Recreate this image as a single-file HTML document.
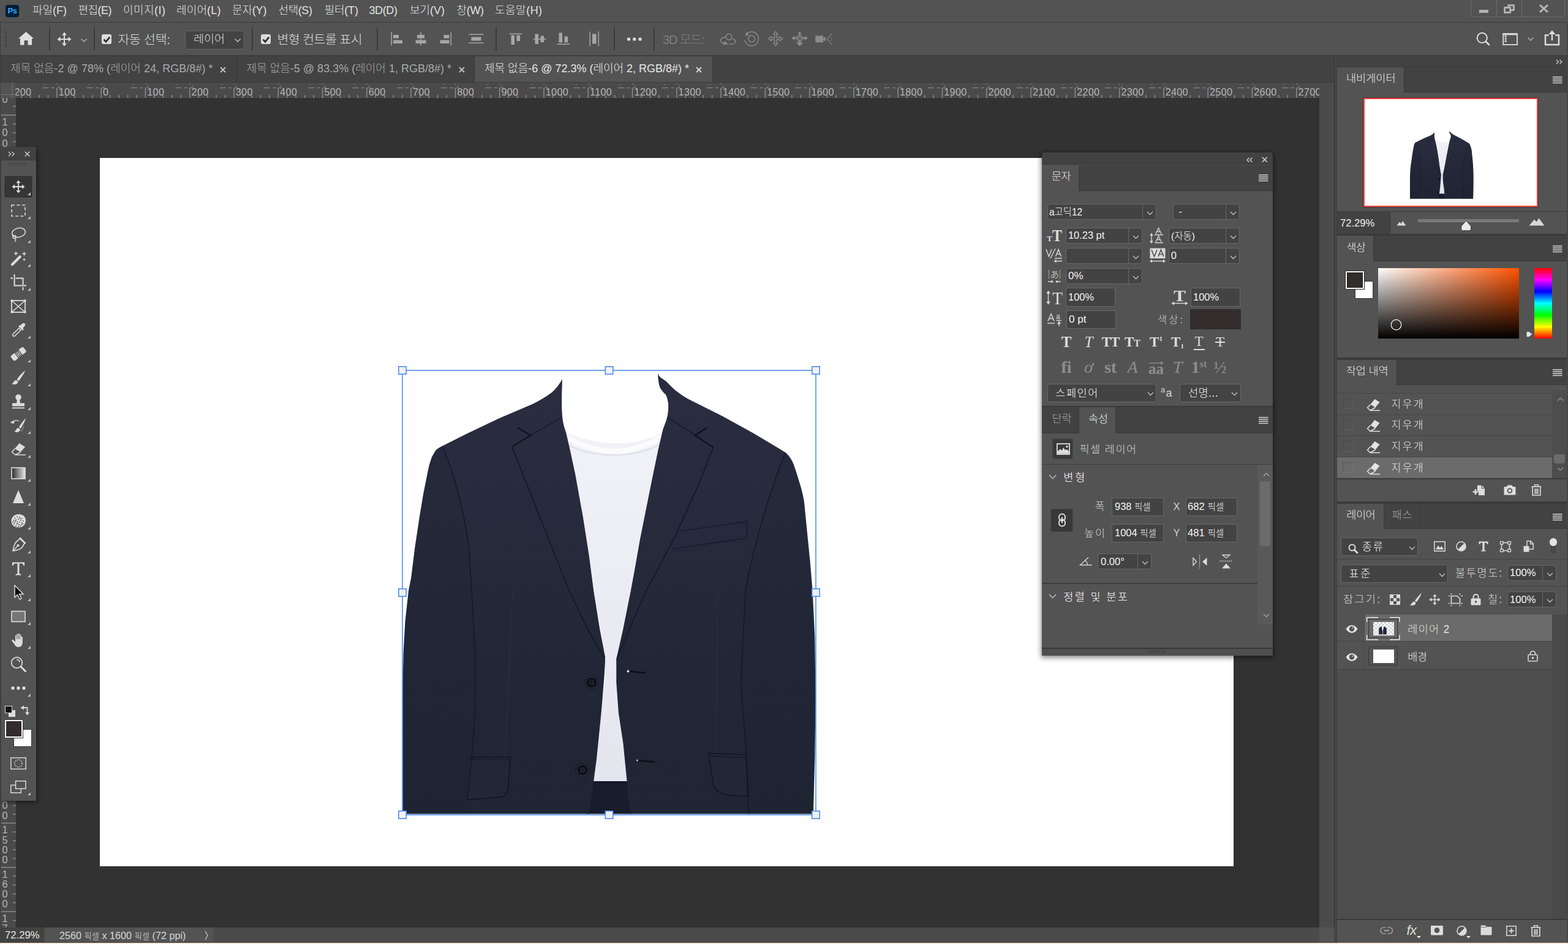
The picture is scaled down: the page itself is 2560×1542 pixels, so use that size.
<!DOCTYPE html>
<html lang="ko"><head><meta charset="utf-8"><title>Photoshop</title>
<style>

html,body{margin:0;padding:0;}
body{width:2560px;height:1542px;overflow:hidden;background:#535353;position:relative;font-family:'Liberation Sans','Noto Sans CJK KR',sans-serif;font-weight:300;}
div,span.t,svg{position:absolute;box-sizing:border-box;}
span.t{white-space:nowrap;display:block;}
svg{overflow:visible;}


.mi{color:#e2e2e2;font-size:18px;line-height:24px;top:5px;}




.sf{font-family:'Liberation Serif',serif;}


</style></head>
<body>
<div style="left:0px;top:92px;width:2179px;height:42px;background:#424242;"></div>
<div style="left:0px;top:135px;width:2154px;height:1380px;background:#323232;"></div>
<div style="left:2154px;top:135px;width:25px;height:1380px;background:#4b4b4b;"></div>
<div style="left:0px;top:35.5px;width:2560px;height:1.5px;background:#3c3c3c;"></div>
<div style="left:0px;top:90px;width:2560px;height:2px;background:#3c3c3c;"></div>
<div style="left:0px;top:134px;width:2179px;height:1px;background:#3a3a3a;"></div>
<div style="left:2178.8px;top:92px;width:4.5px;height:1448px;background:#4a4a4a;"></div>
<div style="left:2178.3px;top:92px;width:1.6px;height:1448px;background:#3b3b3b;"></div>
<div style="left:2182px;top:92px;width:1.3px;height:1448px;background:#3b3b3b;"></div>
<div style="left:0px;top:1515px;width:2179px;height:25px;background:#4b4b4b;"></div>
<div style="left:0px;top:1515px;width:72px;height:25px;background:#424242;"></div>
<div style="left:73px;top:1515px;width:275px;height:25px;background:#535353;"></div>
<span class="t" style="left:8px;top:1516.0px;font-size:17px;line-height:23px;color:#e6e6e6;transform:scaleX(0.9797);transform-origin:0 50%;">72.29%</span>
<span class="t" style="left:97px;top:1516.5px;font-size:17px;line-height:23px;color:#d8d8d8;transform:scaleX(0.9518);transform-origin:0 50%;">2560 <span style="font-size:14px">픽셀</span> x 1600 <span style="font-size:14px">픽셀</span> (72 ppi)</span>
<svg style="left:332px;top:1519px;" width="10" height="18" viewBox="0 0 10 18"><path d="M3 2 L7 9 L3 16" fill="none" stroke="#ccc" stroke-width="1.2"/></svg>
<div style="left:2154px;top:1515px;width:24.3px;height:24.5px;background:#545454;"></div>
<div style="left:0px;top:1539px;width:2560px;height:1px;background:#363636;"></div>
<div style="left:0px;top:1540px;width:2560px;height:2px;background:#efe4d6;"></div>
<div style="left:9px;top:7.5px;width:21.5px;height:20px;background:#001e36;border-radius:4px;"></div>
<span class="t" style="left:12.5px;top:9.5px;font-size:13px;line-height:16px;color:#31a8ff;font-weight:bold;letter-spacing:-0.3px;">Ps</span>
<span class="t" style="left:53px;top:5.3px;font-size:18px;line-height:24px;color:#e2e2e2;letter-spacing:-0.00px;">파일(F)</span>
<span class="t" style="left:127.5px;top:5.3px;font-size:18px;line-height:24px;color:#e2e2e2;letter-spacing:-0.56px;">편집(E)</span>
<span class="t" style="left:201px;top:5.3px;font-size:18px;line-height:24px;color:#e2e2e2;letter-spacing:0.45px;">이미지(I)</span>
<span class="t" style="left:288px;top:5.3px;font-size:18px;line-height:24px;color:#e2e2e2;letter-spacing:0.14px;">레이어(L)</span>
<span class="t" style="left:379px;top:5.3px;font-size:18px;line-height:24px;color:#e2e2e2;letter-spacing:-0.18px;">문자(Y)</span>
<span class="t" style="left:454.5px;top:5.3px;font-size:18px;line-height:24px;color:#e2e2e2;letter-spacing:-0.43px;">선택(S)</span>
<span class="t" style="left:529.5px;top:5.3px;font-size:18px;line-height:24px;color:#e2e2e2;letter-spacing:-0.18px;">필터(T)</span>
<span class="t" style="left:602.5px;top:5.3px;font-size:18px;line-height:24px;color:#e2e2e2;letter-spacing:-0.40px;">3D(D)</span>
<span class="t" style="left:669px;top:5.3px;font-size:18px;line-height:24px;color:#e2e2e2;letter-spacing:-0.06px;">보기(V)</span>
<span class="t" style="left:745.5px;top:5.3px;font-size:18px;line-height:24px;color:#e2e2e2;letter-spacing:-0.32px;">창(W)</span>
<span class="t" style="left:808px;top:5.3px;font-size:18px;line-height:24px;color:#e2e2e2;letter-spacing:0.49px;">도움말(H)</span>
<div style="left:2401px;top:-4px;width:154px;height:31.5px;border:1px solid #6a6a6a;border-radius:4px;"></div>
<div style="left:2443px;top:0px;width:1px;height:27px;background:#6a6a6a;"></div>
<div style="left:2484px;top:0px;width:1px;height:27px;background:#6a6a6a;"></div>
<div style="left:2415px;top:15.5px;width:15px;height:5px;background:#b4b4b4;"></div>
<svg style="left:2454px;top:6px;" width="20" height="17" viewBox="0 0 20 17"><path d="M8.8 5 V2.7 H17.4 V10.5 H13" fill="none" stroke="#b4b4b4" stroke-width="2.8"/><rect x="2.6" y="6.4" width="9" height="8" fill="none" stroke="#b4b4b4" stroke-width="2.8"/></svg>
<svg style="left:2512px;top:6px;" width="18" height="16" viewBox="0 0 18 16"><path d="M2 2.2 L15 13.8 M15 2.2 L2 13.8" fill="none" stroke="#b4b4b4" stroke-width="3"/></svg>
<div style="left:8.2px;top:49px;width:2.8px;height:29px;background:repeating-linear-gradient(#3c3c3c 0 1.2px,transparent 1.2px 2.6px);"></div>
<svg style="left:29px;top:50.2px;" width="27" height="25" viewBox="0 0 27 25"><path d="M13.5 2 L26 13 L23 13 L23 23.5 L16.5 23.5 L16.5 16 L10.5 16 L10.5 23.5 L4 23.5 L4 13 L1 13 Z" fill="#e0e0e0"/></svg>
<div style="left:80px;top:45px;width:1.7px;height:38px;background:#3b3b3b;"></div>
<div style="left:153.1px;top:45px;width:1.7px;height:38px;background:#3b3b3b;"></div>
<div style="left:411.3px;top:45px;width:1.7px;height:38px;background:#3b3b3b;"></div>
<div style="left:615.4px;top:45px;width:1.7px;height:38px;background:#3b3b3b;"></div>
<div style="left:809.3px;top:45px;width:1.7px;height:38px;background:#3b3b3b;"></div>
<div style="left:1002.3px;top:45px;width:1.7px;height:38px;background:#3b3b3b;"></div>
<div style="left:1067.3px;top:45px;width:1.7px;height:38px;background:#3b3b3b;"></div>
<svg style="left:93px;top:52px;" width="24" height="24" viewBox="0 0 24 24"><path d="M12 0.5 L16 5.5 H13 V11 H18.5 V8 L23.5 12 L18.5 16 V13 H13 V18.5 H16 L12 23.5 L8 18.5 H11 V13 H5.5 V16 L0.5 12 L5.5 8 V11 H11 V5.5 H8 Z" fill="#dcdcdc"/></svg>
<svg style="left:130.5px;top:62px;" width="12" height="8" viewBox="0 0 12 8"><path d="M1.5 1.5 L6 6 L10.5 1.5" fill="none" stroke="#bdbdbd" stroke-width="1.2"/></svg>
<div style="left:165.8px;top:56px;width:16.4px;height:16.4px;background:#dcdcdc;border-radius:3px;"></div><svg style="left:165.7px;top:55.8px;" width="17" height="17" viewBox="0 0 17 17"><path d="M3.5 8.5 L7 12.3 L13.2 4.6" fill="none" stroke="#262626" stroke-width="2.6"/></svg>
<span class="t" style="left:192.5px;top:51.5px;font-size:20.5px;line-height:26px;color:#dcdcdc;letter-spacing:-0.27px;">자동 선택:</span>
<div style="left:301.5px;top:50px;width:97px;height:30.5px;background:#434343;border:1px solid #666;border-radius:4px;"></div>
<span class="t" style="left:316px;top:52.45px;font-size:18.5px;line-height:24.5px;color:#dcdcdc;letter-spacing:-0.03px;">레이어</span>
<svg style="left:382px;top:62px;" width="12" height="8" viewBox="0 0 12 8"><path d="M1.5 1.5 L6 6 L10.5 1.5" fill="none" stroke="#c8c8c8" stroke-width="1.4"/></svg>
<div style="left:425.8px;top:56px;width:16.4px;height:16.4px;background:#dcdcdc;border-radius:3px;"></div><svg style="left:425.7px;top:55.8px;" width="17" height="17" viewBox="0 0 17 17"><path d="M3.5 8.5 L7 12.3 L13.2 4.6" fill="none" stroke="#262626" stroke-width="2.6"/></svg>
<span class="t" style="left:452.5px;top:51.5px;font-size:20.5px;line-height:26px;color:#dcdcdc;letter-spacing:-0.55px;">변형 컨트롤 표시</span>
<svg style="left:638px;top:52px;" width="22" height="24" viewBox="0 0 22 24"><rect x="0.5" y="0.5" width="1.5" height="22" fill="#a6a6a6"/><rect x="4" y="5" width="9" height="5.5" fill="#a6a6a6"/><rect x="4" y="13.5" width="15" height="5.5" fill="#a6a6a6"/></svg>
<svg style="left:678px;top:52px;" width="18" height="24" viewBox="0 0 18 24"><rect x="8.2" y="0.5" width="1.6" height="22" fill="#a6a6a6"/><rect x="3" y="5" width="12" height="5.5" fill="#a6a6a6"/><rect x="0.5" y="13.5" width="17" height="5.5" fill="#a6a6a6"/></svg>
<svg style="left:716px;top:52px;" width="22" height="24" viewBox="0 0 22 24"><rect x="19.5" y="0.5" width="1.5" height="22" fill="#a6a6a6"/><rect x="8.5" y="5" width="9" height="5.5" fill="#a6a6a6"/><rect x="2.5" y="13.5" width="15" height="5.5" fill="#a6a6a6"/></svg>
<svg style="left:765px;top:55px;" width="25" height="18" viewBox="0 0 25 18"><rect x="0.5" y="0.5" width="24" height="1.5" fill="#a6a6a6"/><rect x="4.5" y="5.5" width="16" height="6" fill="#a6a6a6"/><rect x="0.5" y="14.5" width="24" height="1.5" fill="#a6a6a6"/></svg>
<svg style="left:831px;top:54px;" width="22" height="20" viewBox="0 0 22 20"><rect x="0.5" y="0.5" width="21" height="1.5" fill="#a6a6a6"/><rect x="3.5" y="3.5" width="5.5" height="15.5" fill="#a6a6a6"/><rect x="12.5" y="3.5" width="5.5" height="9.5" fill="#a6a6a6"/></svg>
<svg style="left:870px;top:55px;" width="22" height="18" viewBox="0 0 22 18"><rect x="0.5" y="8" width="21" height="1.6" fill="#a6a6a6"/><rect x="3.5" y="0.5" width="5.5" height="16.5" fill="#a6a6a6"/><rect x="12.5" y="3.5" width="5.5" height="10.5" fill="#a6a6a6"/></svg>
<svg style="left:909px;top:53px;" width="22" height="21" viewBox="0 0 22 21"><rect x="0.5" y="18.5" width="21" height="1.5" fill="#a6a6a6"/><rect x="3.5" y="0.5" width="5.5" height="16" fill="#a6a6a6"/><rect x="12.5" y="6.5" width="5.5" height="10" fill="#a6a6a6"/></svg>
<svg style="left:962px;top:51px;" width="17" height="25" viewBox="0 0 17 25"><rect x="0.5" y="0.5" width="1.5" height="24" fill="#a6a6a6"/><rect x="5" y="4.5" width="6.5" height="16" fill="#a6a6a6"/><rect x="14.5" y="0.5" width="1.5" height="24" fill="#a6a6a6"/></svg>
<svg style="left:1023px;top:60px;" width="26" height="8" viewBox="0 0 26 8"><circle cx="3.5" cy="4" r="2.7" fill="#dadada"/><circle cx="12.7" cy="4" r="2.7" fill="#dadada"/><circle cx="22" cy="4" r="2.7" fill="#dadada"/></svg>
<span class="t" style="left:1082px;top:51.5px;font-size:20px;line-height:26px;color:#7e7e7e;letter-spacing:-1.00px;">3D 모드:</span>
<svg style="left:1175px;top:52px;" width="27" height="24" viewBox="0 0 27 24"><circle cx="15" cy="8.2" r="4.9" fill="none" stroke="#8a8a8a" stroke-width="1.5"/><path d="M9.5 8.6 C3 9.5 0.2 12.5 1.5 15.3 C2.4 17.3 4.6 18.4 7.5 19" fill="none" stroke="#8a8a8a" stroke-width="1.5"/><path d="M15.5 20.2 C21 20.6 25.3 19 25.8 16.3 C26.2 14.3 24.2 12.3 21 11.2" fill="none" stroke="#8a8a8a" stroke-width="1.5"/><path d="M4.8 21 L14.2 20.6 L8.2 15 Z" fill="#8a8a8a"/></svg>
<svg style="left:1214px;top:51px;" width="26" height="26" viewBox="0 0 26 26"><circle cx="13.1" cy="12.3" r="5.4" fill="none" stroke="#8a8a8a" stroke-width="1.5"/><path d="M7.2 2.6 A11.4 11.4 0 1 1 1.9 14.8" fill="none" stroke="#8a8a8a" stroke-width="1.5"/><path d="M5.2 0.6 L9 6.3 L2.4 7.2 Z" fill="#8a8a8a"/></svg>
<svg style="left:1254px;top:51px;" width="25" height="25" viewBox="0 0 25 25"><path transform="translate(0.3,0.2)" d="M12 .4 L15.6 5 H13.5 V10.5 H19 V8.4 L23.6 12 L19 15.6 V13.5 H13.5 V19 H15.6 L12 23.6 L8.4 19 H10.5 V13.5 H5 V15.6 L.4 12 L5 8.4 V10.5 H10.5 V5 H8.4 Z" fill="none" stroke="#8a8a8a" stroke-width="1.4" stroke-linejoin="round"/></svg>
<svg style="left:1292px;top:51px;" width="27" height="25" viewBox="0 0 27 25"><circle cx="13.6" cy="11.5" r="4.6" fill="#6a6a6a" stroke="#8a8a8a" stroke-width="1.5"/><path d="M13.6 0.3 L16.8 4.2 H14.6 V7 H12.6 V4.2 H10.4 Z M0.3 11.2 L5.2 7.6 V10 H9 V12.6 H5.2 V15 Z M26.9 11.2 L22 7.6 V10 H18.2 V12.6 H22 V15 Z M13.6 24.6 L7.6 18.6 H11.6 V16 H15.6 V18.6 H19.6 Z" fill="#8a8a8a"/></svg>
<svg style="left:1330px;top:54px;" width="29" height="20" viewBox="0 0 29 20"><rect x="1.2" y="4.3" width="13" height="11" rx="1.6" fill="#8a8a8a"/><path d="M14.2 8.6 L18 5.8 V13.8 L14.2 11 Z" fill="#8a8a8a"/><path d="M27.8 1.2 L20.4 9.8 L27.8 18.3" fill="none" stroke="#8a8a8a" stroke-width="1.1"/><path d="M26.5 6.5 C28.5 8.5 28.5 11 26.5 13" fill="none" stroke="#8a8a8a" stroke-width="1"/></svg>
<svg style="left:2409px;top:51px;" width="25" height="26" viewBox="0 0 25 26"><circle cx="10.8" cy="10.9" r="8.1" fill="none" stroke="#dedede" stroke-width="2"/><path d="M16.6 16.8 L22 22" stroke="#dedede" stroke-width="2.6" stroke-linecap="round"/></svg>
<svg style="left:2453px;top:54px;" width="25" height="20" viewBox="0 0 25 20"><rect x="1.2" y="1.2" width="22.8" height="17.8" fill="none" stroke="#dedede" stroke-width="1.8"/><rect x="1" y="0.5" width="23" height="2.8" fill="#dedede"/><rect x="3.5" y="4" width="3.2" height="2.6" fill="#dedede"/><rect x="3.5" y="8" width="3.2" height="2.6" fill="#dedede"/><rect x="3.5" y="12" width="3.2" height="2.6" fill="#dedede"/></svg>
<svg style="left:2493px;top:60px;" width="12" height="8" viewBox="0 0 12 8"><path d="M1.5 1.5 L6 6 L10.5 1.5" fill="none" stroke="#bdbdbd" stroke-width="1.3"/></svg>
<svg style="left:2521px;top:49px;" width="26" height="26" viewBox="0 0 26 26"><path d="M7.5 8.5 H2 V24 H24 V8.5 H18.5" fill="none" stroke="#dedede" stroke-width="2.4"/><path d="M13 2 V17" stroke="#dedede" stroke-width="2.4"/><path d="M13 0.5 L18.5 7 H7.5 Z" fill="#dedede"/></svg>
<div style="left:775px;top:92px;width:388px;height:42px;background:#535353;"></div>
<div style="left:385.5px;top:92px;width:1px;height:42px;background:#383838;"></div>
<div style="left:774px;top:92px;width:1px;height:42px;background:#383838;"></div>
<div style="left:1163px;top:92px;width:1px;height:42px;background:#383838;"></div>
<div style="left:0px;top:37px;width:1.3px;height:98px;background:#3b3b3b;"></div>
<span class="t" style="left:17px;top:100.2px;font-size:18px;line-height:24px;color:#a9a9a9;letter-spacing:0.04px;">제목 없음-2 @ 78% (레이어 24, RGB/8#) *</span>
<svg style="left:359px;top:108.5px;" width="10" height="10" viewBox="0 0 10 10"><path d="M1 1 L9 9 M9 1 L1 9" stroke="#c4c4c4" stroke-width="1.8"/></svg>
<span class="t" style="left:402.5px;top:100.2px;font-size:18px;line-height:24px;color:#a9a9a9;letter-spacing:0.01px;">제목 없음-5 @ 83.3% (레이어 1, RGB/8#) *</span>
<svg style="left:748.5px;top:108.5px;" width="10" height="10" viewBox="0 0 10 10"><path d="M1 1 L9 9 M9 1 L1 9" stroke="#c4c4c4" stroke-width="1.8"/></svg>
<span class="t" style="left:791px;top:100.2px;font-size:18px;line-height:24px;color:#e8e8e8;letter-spacing:-0.01px;">제목 없음-6 @ 72.3% (레이어 2, RGB/8#) *</span>
<svg style="left:1136px;top:108.5px;" width="10" height="10" viewBox="0 0 10 10"><path d="M1 1 L9 9 M9 1 L1 9" stroke="#d8d8d8" stroke-width="1.8"/></svg>
<div style="left:0px;top:135px;width:2154px;height:25px;background:#4a4a4a;"></div>
<svg style="left:0;top:135px;overflow:hidden" width="2154" height="25" viewBox="0 0 2154 25"><rect x="34.35" y="20.2" width="1.5" height="4.8" fill="#8c8c8c"/><rect x="48.80" y="20.2" width="1.5" height="4.8" fill="#8c8c8c"/><rect x="63.26" y="20.2" width="1.5" height="4.8" fill="#8c8c8c"/><rect x="77.71" y="20.2" width="1.5" height="4.8" fill="#8c8c8c"/><rect x="92.17" y="8.5" width="1.5" height="16.5" fill="#8c8c8c"/><rect x="106.63" y="20.2" width="1.5" height="4.8" fill="#8c8c8c"/><rect x="121.08" y="20.2" width="1.5" height="4.8" fill="#8c8c8c"/><rect x="135.54" y="20.2" width="1.5" height="4.8" fill="#8c8c8c"/><rect x="149.99" y="20.2" width="1.5" height="4.8" fill="#8c8c8c"/><rect x="164.45" y="8.5" width="1.5" height="16.5" fill="#8c8c8c"/><rect x="178.91" y="20.2" width="1.5" height="4.8" fill="#8c8c8c"/><rect x="193.36" y="20.2" width="1.5" height="4.8" fill="#8c8c8c"/><rect x="207.82" y="20.2" width="1.5" height="4.8" fill="#8c8c8c"/><rect x="222.27" y="20.2" width="1.5" height="4.8" fill="#8c8c8c"/><rect x="236.73" y="8.5" width="1.5" height="16.5" fill="#8c8c8c"/><rect x="251.19" y="20.2" width="1.5" height="4.8" fill="#8c8c8c"/><rect x="265.64" y="20.2" width="1.5" height="4.8" fill="#8c8c8c"/><rect x="280.10" y="20.2" width="1.5" height="4.8" fill="#8c8c8c"/><rect x="294.55" y="20.2" width="1.5" height="4.8" fill="#8c8c8c"/><rect x="309.01" y="8.5" width="1.5" height="16.5" fill="#8c8c8c"/><rect x="323.47" y="20.2" width="1.5" height="4.8" fill="#8c8c8c"/><rect x="337.92" y="20.2" width="1.5" height="4.8" fill="#8c8c8c"/><rect x="352.38" y="20.2" width="1.5" height="4.8" fill="#8c8c8c"/><rect x="366.83" y="20.2" width="1.5" height="4.8" fill="#8c8c8c"/><rect x="381.29" y="8.5" width="1.5" height="16.5" fill="#8c8c8c"/><rect x="395.75" y="20.2" width="1.5" height="4.8" fill="#8c8c8c"/><rect x="410.20" y="20.2" width="1.5" height="4.8" fill="#8c8c8c"/><rect x="424.66" y="20.2" width="1.5" height="4.8" fill="#8c8c8c"/><rect x="439.11" y="20.2" width="1.5" height="4.8" fill="#8c8c8c"/><rect x="453.57" y="8.5" width="1.5" height="16.5" fill="#8c8c8c"/><rect x="468.03" y="20.2" width="1.5" height="4.8" fill="#8c8c8c"/><rect x="482.48" y="20.2" width="1.5" height="4.8" fill="#8c8c8c"/><rect x="496.94" y="20.2" width="1.5" height="4.8" fill="#8c8c8c"/><rect x="511.39" y="20.2" width="1.5" height="4.8" fill="#8c8c8c"/><rect x="525.85" y="8.5" width="1.5" height="16.5" fill="#8c8c8c"/><rect x="540.31" y="20.2" width="1.5" height="4.8" fill="#8c8c8c"/><rect x="554.76" y="20.2" width="1.5" height="4.8" fill="#8c8c8c"/><rect x="569.22" y="20.2" width="1.5" height="4.8" fill="#8c8c8c"/><rect x="583.67" y="20.2" width="1.5" height="4.8" fill="#8c8c8c"/><rect x="598.13" y="8.5" width="1.5" height="16.5" fill="#8c8c8c"/><rect x="612.59" y="20.2" width="1.5" height="4.8" fill="#8c8c8c"/><rect x="627.04" y="20.2" width="1.5" height="4.8" fill="#8c8c8c"/><rect x="641.50" y="20.2" width="1.5" height="4.8" fill="#8c8c8c"/><rect x="655.95" y="20.2" width="1.5" height="4.8" fill="#8c8c8c"/><rect x="670.41" y="8.5" width="1.5" height="16.5" fill="#8c8c8c"/><rect x="684.87" y="20.2" width="1.5" height="4.8" fill="#8c8c8c"/><rect x="699.32" y="20.2" width="1.5" height="4.8" fill="#8c8c8c"/><rect x="713.78" y="20.2" width="1.5" height="4.8" fill="#8c8c8c"/><rect x="728.23" y="20.2" width="1.5" height="4.8" fill="#8c8c8c"/><rect x="742.69" y="8.5" width="1.5" height="16.5" fill="#8c8c8c"/><rect x="757.15" y="20.2" width="1.5" height="4.8" fill="#8c8c8c"/><rect x="771.60" y="20.2" width="1.5" height="4.8" fill="#8c8c8c"/><rect x="786.06" y="20.2" width="1.5" height="4.8" fill="#8c8c8c"/><rect x="800.51" y="20.2" width="1.5" height="4.8" fill="#8c8c8c"/><rect x="814.97" y="8.5" width="1.5" height="16.5" fill="#8c8c8c"/><rect x="829.43" y="20.2" width="1.5" height="4.8" fill="#8c8c8c"/><rect x="843.88" y="20.2" width="1.5" height="4.8" fill="#8c8c8c"/><rect x="858.34" y="20.2" width="1.5" height="4.8" fill="#8c8c8c"/><rect x="872.79" y="20.2" width="1.5" height="4.8" fill="#8c8c8c"/><rect x="887.25" y="8.5" width="1.5" height="16.5" fill="#8c8c8c"/><rect x="901.71" y="20.2" width="1.5" height="4.8" fill="#8c8c8c"/><rect x="916.16" y="20.2" width="1.5" height="4.8" fill="#8c8c8c"/><rect x="930.62" y="20.2" width="1.5" height="4.8" fill="#8c8c8c"/><rect x="945.07" y="20.2" width="1.5" height="4.8" fill="#8c8c8c"/><rect x="959.53" y="8.5" width="1.5" height="16.5" fill="#8c8c8c"/><rect x="973.99" y="20.2" width="1.5" height="4.8" fill="#8c8c8c"/><rect x="988.44" y="20.2" width="1.5" height="4.8" fill="#8c8c8c"/><rect x="1002.90" y="20.2" width="1.5" height="4.8" fill="#8c8c8c"/><rect x="1017.35" y="20.2" width="1.5" height="4.8" fill="#8c8c8c"/><rect x="1031.81" y="8.5" width="1.5" height="16.5" fill="#8c8c8c"/><rect x="1046.27" y="20.2" width="1.5" height="4.8" fill="#8c8c8c"/><rect x="1060.72" y="20.2" width="1.5" height="4.8" fill="#8c8c8c"/><rect x="1075.18" y="20.2" width="1.5" height="4.8" fill="#8c8c8c"/><rect x="1089.63" y="20.2" width="1.5" height="4.8" fill="#8c8c8c"/><rect x="1104.09" y="8.5" width="1.5" height="16.5" fill="#8c8c8c"/><rect x="1118.55" y="20.2" width="1.5" height="4.8" fill="#8c8c8c"/><rect x="1133.00" y="20.2" width="1.5" height="4.8" fill="#8c8c8c"/><rect x="1147.46" y="20.2" width="1.5" height="4.8" fill="#8c8c8c"/><rect x="1161.91" y="20.2" width="1.5" height="4.8" fill="#8c8c8c"/><rect x="1176.37" y="8.5" width="1.5" height="16.5" fill="#8c8c8c"/><rect x="1190.83" y="20.2" width="1.5" height="4.8" fill="#8c8c8c"/><rect x="1205.28" y="20.2" width="1.5" height="4.8" fill="#8c8c8c"/><rect x="1219.74" y="20.2" width="1.5" height="4.8" fill="#8c8c8c"/><rect x="1234.19" y="20.2" width="1.5" height="4.8" fill="#8c8c8c"/><rect x="1248.65" y="8.5" width="1.5" height="16.5" fill="#8c8c8c"/><rect x="1263.11" y="20.2" width="1.5" height="4.8" fill="#8c8c8c"/><rect x="1277.56" y="20.2" width="1.5" height="4.8" fill="#8c8c8c"/><rect x="1292.02" y="20.2" width="1.5" height="4.8" fill="#8c8c8c"/><rect x="1306.47" y="20.2" width="1.5" height="4.8" fill="#8c8c8c"/><rect x="1320.93" y="8.5" width="1.5" height="16.5" fill="#8c8c8c"/><rect x="1335.39" y="20.2" width="1.5" height="4.8" fill="#8c8c8c"/><rect x="1349.84" y="20.2" width="1.5" height="4.8" fill="#8c8c8c"/><rect x="1364.30" y="20.2" width="1.5" height="4.8" fill="#8c8c8c"/><rect x="1378.75" y="20.2" width="1.5" height="4.8" fill="#8c8c8c"/><rect x="1393.21" y="8.5" width="1.5" height="16.5" fill="#8c8c8c"/><rect x="1407.67" y="20.2" width="1.5" height="4.8" fill="#8c8c8c"/><rect x="1422.12" y="20.2" width="1.5" height="4.8" fill="#8c8c8c"/><rect x="1436.58" y="20.2" width="1.5" height="4.8" fill="#8c8c8c"/><rect x="1451.03" y="20.2" width="1.5" height="4.8" fill="#8c8c8c"/><rect x="1465.49" y="8.5" width="1.5" height="16.5" fill="#8c8c8c"/><rect x="1479.95" y="20.2" width="1.5" height="4.8" fill="#8c8c8c"/><rect x="1494.40" y="20.2" width="1.5" height="4.8" fill="#8c8c8c"/><rect x="1508.86" y="20.2" width="1.5" height="4.8" fill="#8c8c8c"/><rect x="1523.31" y="20.2" width="1.5" height="4.8" fill="#8c8c8c"/><rect x="1537.77" y="8.5" width="1.5" height="16.5" fill="#8c8c8c"/><rect x="1552.23" y="20.2" width="1.5" height="4.8" fill="#8c8c8c"/><rect x="1566.68" y="20.2" width="1.5" height="4.8" fill="#8c8c8c"/><rect x="1581.14" y="20.2" width="1.5" height="4.8" fill="#8c8c8c"/><rect x="1595.59" y="20.2" width="1.5" height="4.8" fill="#8c8c8c"/><rect x="1610.05" y="8.5" width="1.5" height="16.5" fill="#8c8c8c"/><rect x="1624.51" y="20.2" width="1.5" height="4.8" fill="#8c8c8c"/><rect x="1638.96" y="20.2" width="1.5" height="4.8" fill="#8c8c8c"/><rect x="1653.42" y="20.2" width="1.5" height="4.8" fill="#8c8c8c"/><rect x="1667.87" y="20.2" width="1.5" height="4.8" fill="#8c8c8c"/><rect x="1682.33" y="8.5" width="1.5" height="16.5" fill="#8c8c8c"/><rect x="1696.79" y="20.2" width="1.5" height="4.8" fill="#8c8c8c"/><rect x="1711.24" y="20.2" width="1.5" height="4.8" fill="#8c8c8c"/><rect x="1725.70" y="20.2" width="1.5" height="4.8" fill="#8c8c8c"/><rect x="1740.15" y="20.2" width="1.5" height="4.8" fill="#8c8c8c"/><rect x="1754.61" y="8.5" width="1.5" height="16.5" fill="#8c8c8c"/><rect x="1769.07" y="20.2" width="1.5" height="4.8" fill="#8c8c8c"/><rect x="1783.52" y="20.2" width="1.5" height="4.8" fill="#8c8c8c"/><rect x="1797.98" y="20.2" width="1.5" height="4.8" fill="#8c8c8c"/><rect x="1812.43" y="20.2" width="1.5" height="4.8" fill="#8c8c8c"/><rect x="1826.89" y="8.5" width="1.5" height="16.5" fill="#8c8c8c"/><rect x="1841.35" y="20.2" width="1.5" height="4.8" fill="#8c8c8c"/><rect x="1855.80" y="20.2" width="1.5" height="4.8" fill="#8c8c8c"/><rect x="1870.26" y="20.2" width="1.5" height="4.8" fill="#8c8c8c"/><rect x="1884.71" y="20.2" width="1.5" height="4.8" fill="#8c8c8c"/><rect x="1899.17" y="8.5" width="1.5" height="16.5" fill="#8c8c8c"/><rect x="1913.63" y="20.2" width="1.5" height="4.8" fill="#8c8c8c"/><rect x="1928.08" y="20.2" width="1.5" height="4.8" fill="#8c8c8c"/><rect x="1942.54" y="20.2" width="1.5" height="4.8" fill="#8c8c8c"/><rect x="1956.99" y="20.2" width="1.5" height="4.8" fill="#8c8c8c"/><rect x="1971.45" y="8.5" width="1.5" height="16.5" fill="#8c8c8c"/><rect x="1985.91" y="20.2" width="1.5" height="4.8" fill="#8c8c8c"/><rect x="2000.36" y="20.2" width="1.5" height="4.8" fill="#8c8c8c"/><rect x="2014.82" y="20.2" width="1.5" height="4.8" fill="#8c8c8c"/><rect x="2029.27" y="20.2" width="1.5" height="4.8" fill="#8c8c8c"/><rect x="2043.73" y="8.5" width="1.5" height="16.5" fill="#8c8c8c"/><rect x="2058.19" y="20.2" width="1.5" height="4.8" fill="#8c8c8c"/><rect x="2072.64" y="20.2" width="1.5" height="4.8" fill="#8c8c8c"/><rect x="2087.10" y="20.2" width="1.5" height="4.8" fill="#8c8c8c"/><rect x="2101.55" y="20.2" width="1.5" height="4.8" fill="#8c8c8c"/><rect x="2116.01" y="8.5" width="1.5" height="16.5" fill="#8c8c8c"/><rect x="2130.47" y="20.2" width="1.5" height="4.8" fill="#8c8c8c"/><rect x="2144.92" y="20.2" width="1.5" height="4.8" fill="#8c8c8c"/><path d="M69.4 8.5 h10 M83.9 8.5 h5 M93.7 8.5 h5" stroke="#d0d0d0" stroke-width="1" stroke-opacity="0.55"/><rect x="72.4" y="2.8" width="1.6" height="1.2" fill="#c8c8c8" fill-opacity="0.5"/><rect x="92.4" y="1.5" width="1.6" height="1.4" fill="#c8c8c8" fill-opacity="0.5"/><rect x="96.4" y="4.5" width="1.6" height="2.2" fill="#c8c8c8" fill-opacity="0.4"/><path d="M141.7 8.5 h10 M156.2 8.5 h5 M166.0 8.5 h5" stroke="#d0d0d0" stroke-width="1" stroke-opacity="0.55"/><rect x="144.7" y="2.8" width="1.6" height="1.2" fill="#c8c8c8" fill-opacity="0.5"/><rect x="164.7" y="1.5" width="1.6" height="1.4" fill="#c8c8c8" fill-opacity="0.5"/><rect x="168.7" y="4.5" width="1.6" height="2.2" fill="#c8c8c8" fill-opacity="0.4"/><path d="M214.0 8.5 h10 M228.5 8.5 h5 M238.3 8.5 h5" stroke="#d0d0d0" stroke-width="1" stroke-opacity="0.55"/><rect x="217.0" y="2.8" width="1.6" height="1.2" fill="#c8c8c8" fill-opacity="0.5"/><rect x="237.0" y="1.5" width="1.6" height="1.4" fill="#c8c8c8" fill-opacity="0.5"/><rect x="241.0" y="4.5" width="1.6" height="2.2" fill="#c8c8c8" fill-opacity="0.4"/><path d="M286.3 8.5 h10 M300.8 8.5 h5 M310.6 8.5 h5" stroke="#d0d0d0" stroke-width="1" stroke-opacity="0.55"/><rect x="289.3" y="2.8" width="1.6" height="1.2" fill="#c8c8c8" fill-opacity="0.5"/><rect x="309.3" y="1.5" width="1.6" height="1.4" fill="#c8c8c8" fill-opacity="0.5"/><rect x="313.3" y="4.5" width="1.6" height="2.2" fill="#c8c8c8" fill-opacity="0.4"/><path d="M358.5 8.5 h10 M373.0 8.5 h5 M382.8 8.5 h5" stroke="#d0d0d0" stroke-width="1" stroke-opacity="0.55"/><rect x="361.5" y="2.8" width="1.6" height="1.2" fill="#c8c8c8" fill-opacity="0.5"/><rect x="381.5" y="1.5" width="1.6" height="1.4" fill="#c8c8c8" fill-opacity="0.5"/><rect x="385.5" y="4.5" width="1.6" height="2.2" fill="#c8c8c8" fill-opacity="0.4"/><path d="M430.8 8.5 h10 M445.3 8.5 h5 M455.1 8.5 h5" stroke="#d0d0d0" stroke-width="1" stroke-opacity="0.55"/><rect x="433.8" y="2.8" width="1.6" height="1.2" fill="#c8c8c8" fill-opacity="0.5"/><rect x="453.8" y="1.5" width="1.6" height="1.4" fill="#c8c8c8" fill-opacity="0.5"/><rect x="457.8" y="4.5" width="1.6" height="2.2" fill="#c8c8c8" fill-opacity="0.4"/><path d="M503.1 8.5 h10 M517.6 8.5 h5 M527.4 8.5 h5" stroke="#d0d0d0" stroke-width="1" stroke-opacity="0.55"/><rect x="506.1" y="2.8" width="1.6" height="1.2" fill="#c8c8c8" fill-opacity="0.5"/><rect x="526.1" y="1.5" width="1.6" height="1.4" fill="#c8c8c8" fill-opacity="0.5"/><rect x="530.1" y="4.5" width="1.6" height="2.2" fill="#c8c8c8" fill-opacity="0.4"/><path d="M575.4 8.5 h10 M589.9 8.5 h5 M599.7 8.5 h5" stroke="#d0d0d0" stroke-width="1" stroke-opacity="0.55"/><rect x="578.4" y="2.8" width="1.6" height="1.2" fill="#c8c8c8" fill-opacity="0.5"/><rect x="598.4" y="1.5" width="1.6" height="1.4" fill="#c8c8c8" fill-opacity="0.5"/><rect x="602.4" y="4.5" width="1.6" height="2.2" fill="#c8c8c8" fill-opacity="0.4"/><path d="M647.7 8.5 h10 M662.2 8.5 h5 M672.0 8.5 h5" stroke="#d0d0d0" stroke-width="1" stroke-opacity="0.55"/><rect x="650.7" y="2.8" width="1.6" height="1.2" fill="#c8c8c8" fill-opacity="0.5"/><rect x="670.7" y="1.5" width="1.6" height="1.4" fill="#c8c8c8" fill-opacity="0.5"/><rect x="674.7" y="4.5" width="1.6" height="2.2" fill="#c8c8c8" fill-opacity="0.4"/><path d="M719.9 8.5 h10 M734.4 8.5 h5 M744.2 8.5 h5" stroke="#d0d0d0" stroke-width="1" stroke-opacity="0.55"/><rect x="722.9" y="2.8" width="1.6" height="1.2" fill="#c8c8c8" fill-opacity="0.5"/><rect x="742.9" y="1.5" width="1.6" height="1.4" fill="#c8c8c8" fill-opacity="0.5"/><rect x="746.9" y="4.5" width="1.6" height="2.2" fill="#c8c8c8" fill-opacity="0.4"/><path d="M792.2 8.5 h10 M806.7 8.5 h5 M816.5 8.5 h5" stroke="#d0d0d0" stroke-width="1" stroke-opacity="0.55"/><rect x="795.2" y="2.8" width="1.6" height="1.2" fill="#c8c8c8" fill-opacity="0.5"/><rect x="815.2" y="1.5" width="1.6" height="1.4" fill="#c8c8c8" fill-opacity="0.5"/><rect x="819.2" y="4.5" width="1.6" height="2.2" fill="#c8c8c8" fill-opacity="0.4"/><path d="M864.5 8.5 h10 M879.0 8.5 h5 M888.8 8.5 h5" stroke="#d0d0d0" stroke-width="1" stroke-opacity="0.55"/><rect x="867.5" y="2.8" width="1.6" height="1.2" fill="#c8c8c8" fill-opacity="0.5"/><rect x="887.5" y="1.5" width="1.6" height="1.4" fill="#c8c8c8" fill-opacity="0.5"/><rect x="891.5" y="4.5" width="1.6" height="2.2" fill="#c8c8c8" fill-opacity="0.4"/><path d="M936.8 8.5 h10 M951.3 8.5 h5 M961.1 8.5 h5" stroke="#d0d0d0" stroke-width="1" stroke-opacity="0.55"/><rect x="939.8" y="2.8" width="1.6" height="1.2" fill="#c8c8c8" fill-opacity="0.5"/><rect x="959.8" y="1.5" width="1.6" height="1.4" fill="#c8c8c8" fill-opacity="0.5"/><rect x="963.8" y="4.5" width="1.6" height="2.2" fill="#c8c8c8" fill-opacity="0.4"/><path d="M1009.1 8.5 h10 M1023.6 8.5 h5 M1033.4 8.5 h5" stroke="#d0d0d0" stroke-width="1" stroke-opacity="0.55"/><rect x="1012.1" y="2.8" width="1.6" height="1.2" fill="#c8c8c8" fill-opacity="0.5"/><rect x="1032.1" y="1.5" width="1.6" height="1.4" fill="#c8c8c8" fill-opacity="0.5"/><rect x="1036.1" y="4.5" width="1.6" height="2.2" fill="#c8c8c8" fill-opacity="0.4"/><path d="M1081.3 8.5 h10 M1095.8 8.5 h5 M1105.6 8.5 h5" stroke="#d0d0d0" stroke-width="1" stroke-opacity="0.55"/><rect x="1084.3" y="2.8" width="1.6" height="1.2" fill="#c8c8c8" fill-opacity="0.5"/><rect x="1104.3" y="1.5" width="1.6" height="1.4" fill="#c8c8c8" fill-opacity="0.5"/><rect x="1108.3" y="4.5" width="1.6" height="2.2" fill="#c8c8c8" fill-opacity="0.4"/><path d="M1153.6 8.5 h10 M1168.1 8.5 h5 M1177.9 8.5 h5" stroke="#d0d0d0" stroke-width="1" stroke-opacity="0.55"/><rect x="1156.6" y="2.8" width="1.6" height="1.2" fill="#c8c8c8" fill-opacity="0.5"/><rect x="1176.6" y="1.5" width="1.6" height="1.4" fill="#c8c8c8" fill-opacity="0.5"/><rect x="1180.6" y="4.5" width="1.6" height="2.2" fill="#c8c8c8" fill-opacity="0.4"/><path d="M1225.9 8.5 h10 M1240.4 8.5 h5 M1250.2 8.5 h5" stroke="#d0d0d0" stroke-width="1" stroke-opacity="0.55"/><rect x="1228.9" y="2.8" width="1.6" height="1.2" fill="#c8c8c8" fill-opacity="0.5"/><rect x="1248.9" y="1.5" width="1.6" height="1.4" fill="#c8c8c8" fill-opacity="0.5"/><rect x="1252.9" y="4.5" width="1.6" height="2.2" fill="#c8c8c8" fill-opacity="0.4"/><path d="M1298.2 8.5 h10 M1312.7 8.5 h5 M1322.5 8.5 h5" stroke="#d0d0d0" stroke-width="1" stroke-opacity="0.55"/><rect x="1301.2" y="2.8" width="1.6" height="1.2" fill="#c8c8c8" fill-opacity="0.5"/><rect x="1321.2" y="1.5" width="1.6" height="1.4" fill="#c8c8c8" fill-opacity="0.5"/><rect x="1325.2" y="4.5" width="1.6" height="2.2" fill="#c8c8c8" fill-opacity="0.4"/><path d="M1370.5 8.5 h10 M1385.0 8.5 h5 M1394.8 8.5 h5" stroke="#d0d0d0" stroke-width="1" stroke-opacity="0.55"/><rect x="1373.5" y="2.8" width="1.6" height="1.2" fill="#c8c8c8" fill-opacity="0.5"/><rect x="1393.5" y="1.5" width="1.6" height="1.4" fill="#c8c8c8" fill-opacity="0.5"/><rect x="1397.5" y="4.5" width="1.6" height="2.2" fill="#c8c8c8" fill-opacity="0.4"/><path d="M1442.7 8.5 h10 M1457.2 8.5 h5 M1467.0 8.5 h5" stroke="#d0d0d0" stroke-width="1" stroke-opacity="0.55"/><rect x="1445.7" y="2.8" width="1.6" height="1.2" fill="#c8c8c8" fill-opacity="0.5"/><rect x="1465.7" y="1.5" width="1.6" height="1.4" fill="#c8c8c8" fill-opacity="0.5"/><rect x="1469.7" y="4.5" width="1.6" height="2.2" fill="#c8c8c8" fill-opacity="0.4"/><path d="M1515.0 8.5 h10 M1529.5 8.5 h5 M1539.3 8.5 h5" stroke="#d0d0d0" stroke-width="1" stroke-opacity="0.55"/><rect x="1518.0" y="2.8" width="1.6" height="1.2" fill="#c8c8c8" fill-opacity="0.5"/><rect x="1538.0" y="1.5" width="1.6" height="1.4" fill="#c8c8c8" fill-opacity="0.5"/><rect x="1542.0" y="4.5" width="1.6" height="2.2" fill="#c8c8c8" fill-opacity="0.4"/><path d="M1587.3 8.5 h10 M1601.8 8.5 h5 M1611.6 8.5 h5" stroke="#d0d0d0" stroke-width="1" stroke-opacity="0.55"/><rect x="1590.3" y="2.8" width="1.6" height="1.2" fill="#c8c8c8" fill-opacity="0.5"/><rect x="1610.3" y="1.5" width="1.6" height="1.4" fill="#c8c8c8" fill-opacity="0.5"/><rect x="1614.3" y="4.5" width="1.6" height="2.2" fill="#c8c8c8" fill-opacity="0.4"/><path d="M1659.6 8.5 h10 M1674.1 8.5 h5 M1683.9 8.5 h5" stroke="#d0d0d0" stroke-width="1" stroke-opacity="0.55"/><rect x="1662.6" y="2.8" width="1.6" height="1.2" fill="#c8c8c8" fill-opacity="0.5"/><rect x="1682.6" y="1.5" width="1.6" height="1.4" fill="#c8c8c8" fill-opacity="0.5"/><rect x="1686.6" y="4.5" width="1.6" height="2.2" fill="#c8c8c8" fill-opacity="0.4"/><path d="M1731.9 8.5 h10 M1746.4 8.5 h5 M1756.2 8.5 h5" stroke="#d0d0d0" stroke-width="1" stroke-opacity="0.55"/><rect x="1734.9" y="2.8" width="1.6" height="1.2" fill="#c8c8c8" fill-opacity="0.5"/><rect x="1754.9" y="1.5" width="1.6" height="1.4" fill="#c8c8c8" fill-opacity="0.5"/><rect x="1758.9" y="4.5" width="1.6" height="2.2" fill="#c8c8c8" fill-opacity="0.4"/><path d="M1804.1 8.5 h10 M1818.6 8.5 h5 M1828.4 8.5 h5" stroke="#d0d0d0" stroke-width="1" stroke-opacity="0.55"/><rect x="1807.1" y="2.8" width="1.6" height="1.2" fill="#c8c8c8" fill-opacity="0.5"/><rect x="1827.1" y="1.5" width="1.6" height="1.4" fill="#c8c8c8" fill-opacity="0.5"/><rect x="1831.1" y="4.5" width="1.6" height="2.2" fill="#c8c8c8" fill-opacity="0.4"/><path d="M1876.4 8.5 h10 M1890.9 8.5 h5 M1900.7 8.5 h5" stroke="#d0d0d0" stroke-width="1" stroke-opacity="0.55"/><rect x="1879.4" y="2.8" width="1.6" height="1.2" fill="#c8c8c8" fill-opacity="0.5"/><rect x="1899.4" y="1.5" width="1.6" height="1.4" fill="#c8c8c8" fill-opacity="0.5"/><rect x="1903.4" y="4.5" width="1.6" height="2.2" fill="#c8c8c8" fill-opacity="0.4"/><path d="M1948.7 8.5 h10 M1963.2 8.5 h5 M1973.0 8.5 h5" stroke="#d0d0d0" stroke-width="1" stroke-opacity="0.55"/><rect x="1951.7" y="2.8" width="1.6" height="1.2" fill="#c8c8c8" fill-opacity="0.5"/><rect x="1971.7" y="1.5" width="1.6" height="1.4" fill="#c8c8c8" fill-opacity="0.5"/><rect x="1975.7" y="4.5" width="1.6" height="2.2" fill="#c8c8c8" fill-opacity="0.4"/><path d="M2021.0 8.5 h10 M2035.5 8.5 h5 M2045.3 8.5 h5" stroke="#d0d0d0" stroke-width="1" stroke-opacity="0.55"/><rect x="2024.0" y="2.8" width="1.6" height="1.2" fill="#c8c8c8" fill-opacity="0.5"/><rect x="2044.0" y="1.5" width="1.6" height="1.4" fill="#c8c8c8" fill-opacity="0.5"/><rect x="2048.0" y="4.5" width="1.6" height="2.2" fill="#c8c8c8" fill-opacity="0.4"/><path d="M2093.3 8.5 h10 M2107.8 8.5 h5 M2117.6 8.5 h5" stroke="#d0d0d0" stroke-width="1" stroke-opacity="0.55"/><rect x="2096.3" y="2.8" width="1.6" height="1.2" fill="#c8c8c8" fill-opacity="0.5"/><rect x="2116.3" y="1.5" width="1.6" height="1.4" fill="#c8c8c8" fill-opacity="0.5"/><rect x="2120.3" y="4.5" width="1.6" height="2.2" fill="#c8c8c8" fill-opacity="0.4"/><g font-family="Liberation Sans, sans-serif" font-size="16.2" letter-spacing="0.3" fill="#b6b6b6"><text x="23.4" y="21" >200</text><text x="95.7" y="21" >100</text><text x="168.0" y="21" >0</text><text x="240.3" y="21" >100</text><text x="312.6" y="21" >200</text><text x="384.8" y="21" >300</text><text x="457.1" y="21" >400</text><text x="529.4" y="21" >500</text><text x="601.7" y="21" >600</text><text x="674.0" y="21" >700</text><text x="746.2" y="21" >800</text><text x="818.5" y="21" >900</text><text x="890.8" y="21" >1000</text><text x="963.1" y="21" >1100</text><text x="1035.4" y="21" >1200</text><text x="1107.6" y="21" >1300</text><text x="1179.9" y="21" >1400</text><text x="1252.2" y="21" >1500</text><text x="1324.5" y="21" >1600</text><text x="1396.8" y="21" >1700</text><text x="1469.0" y="21" >1800</text><text x="1541.3" y="21" >1900</text><text x="1613.6" y="21" >2000</text><text x="1685.9" y="21" >2100</text><text x="1758.2" y="21" >2200</text><text x="1830.4" y="21" >2300</text><text x="1902.7" y="21" >2400</text><text x="1975.0" y="21" >2500</text><text x="2047.3" y="21" >2600</text><text x="2119.6" y="21" >2700</text></g><rect x="0" y="0" width="25.5" height="25" fill="#535353"/><path d="M19.9 0 V25 M0 19.5 H25.5" stroke="#8e8e8e" stroke-width="1" stroke-dasharray="1 1"/></svg>
<div style="left:0px;top:160px;width:26px;height:1355px;background:#4a4a4a;"></div>
<svg style="left:0;top:160px;overflow:hidden" width="26" height="1355" viewBox="0 0 26 1355"><rect x="21" y="-30.55" width="5" height="1.5" fill="#8c8c8c"/><rect x="21" y="-16.10" width="5" height="1.5" fill="#8c8c8c"/><rect x="21" y="-1.64" width="5" height="1.5" fill="#8c8c8c"/><rect x="21" y="12.81" width="5" height="1.5" fill="#8c8c8c"/><rect x="2" y="27.27" width="24" height="1.5" fill="#8c8c8c"/><rect x="21" y="41.73" width="5" height="1.5" fill="#8c8c8c"/><rect x="21" y="56.18" width="5" height="1.5" fill="#8c8c8c"/><rect x="21" y="70.64" width="5" height="1.5" fill="#8c8c8c"/><rect x="21" y="85.09" width="5" height="1.5" fill="#8c8c8c"/><rect x="2" y="99.55" width="24" height="1.5" fill="#8c8c8c"/><rect x="21" y="114.01" width="5" height="1.5" fill="#8c8c8c"/><rect x="21" y="128.46" width="5" height="1.5" fill="#8c8c8c"/><rect x="21" y="142.92" width="5" height="1.5" fill="#8c8c8c"/><rect x="21" y="157.37" width="5" height="1.5" fill="#8c8c8c"/><rect x="2" y="171.83" width="24" height="1.5" fill="#8c8c8c"/><rect x="21" y="186.29" width="5" height="1.5" fill="#8c8c8c"/><rect x="21" y="200.74" width="5" height="1.5" fill="#8c8c8c"/><rect x="21" y="215.20" width="5" height="1.5" fill="#8c8c8c"/><rect x="21" y="229.65" width="5" height="1.5" fill="#8c8c8c"/><rect x="2" y="244.11" width="24" height="1.5" fill="#8c8c8c"/><rect x="21" y="258.57" width="5" height="1.5" fill="#8c8c8c"/><rect x="21" y="273.02" width="5" height="1.5" fill="#8c8c8c"/><rect x="21" y="287.48" width="5" height="1.5" fill="#8c8c8c"/><rect x="21" y="301.93" width="5" height="1.5" fill="#8c8c8c"/><rect x="2" y="316.39" width="24" height="1.5" fill="#8c8c8c"/><rect x="21" y="330.85" width="5" height="1.5" fill="#8c8c8c"/><rect x="21" y="345.30" width="5" height="1.5" fill="#8c8c8c"/><rect x="21" y="359.76" width="5" height="1.5" fill="#8c8c8c"/><rect x="21" y="374.21" width="5" height="1.5" fill="#8c8c8c"/><rect x="2" y="388.67" width="24" height="1.5" fill="#8c8c8c"/><rect x="21" y="403.13" width="5" height="1.5" fill="#8c8c8c"/><rect x="21" y="417.58" width="5" height="1.5" fill="#8c8c8c"/><rect x="21" y="432.04" width="5" height="1.5" fill="#8c8c8c"/><rect x="21" y="446.49" width="5" height="1.5" fill="#8c8c8c"/><rect x="2" y="460.95" width="24" height="1.5" fill="#8c8c8c"/><rect x="21" y="475.41" width="5" height="1.5" fill="#8c8c8c"/><rect x="21" y="489.86" width="5" height="1.5" fill="#8c8c8c"/><rect x="21" y="504.32" width="5" height="1.5" fill="#8c8c8c"/><rect x="21" y="518.77" width="5" height="1.5" fill="#8c8c8c"/><rect x="2" y="533.23" width="24" height="1.5" fill="#8c8c8c"/><rect x="21" y="547.69" width="5" height="1.5" fill="#8c8c8c"/><rect x="21" y="562.14" width="5" height="1.5" fill="#8c8c8c"/><rect x="21" y="576.60" width="5" height="1.5" fill="#8c8c8c"/><rect x="21" y="591.05" width="5" height="1.5" fill="#8c8c8c"/><rect x="2" y="605.51" width="24" height="1.5" fill="#8c8c8c"/><rect x="21" y="619.97" width="5" height="1.5" fill="#8c8c8c"/><rect x="21" y="634.42" width="5" height="1.5" fill="#8c8c8c"/><rect x="21" y="648.88" width="5" height="1.5" fill="#8c8c8c"/><rect x="21" y="663.33" width="5" height="1.5" fill="#8c8c8c"/><rect x="2" y="677.79" width="24" height="1.5" fill="#8c8c8c"/><rect x="21" y="692.25" width="5" height="1.5" fill="#8c8c8c"/><rect x="21" y="706.70" width="5" height="1.5" fill="#8c8c8c"/><rect x="21" y="721.16" width="5" height="1.5" fill="#8c8c8c"/><rect x="21" y="735.61" width="5" height="1.5" fill="#8c8c8c"/><rect x="2" y="750.07" width="24" height="1.5" fill="#8c8c8c"/><rect x="21" y="764.53" width="5" height="1.5" fill="#8c8c8c"/><rect x="21" y="778.98" width="5" height="1.5" fill="#8c8c8c"/><rect x="21" y="793.44" width="5" height="1.5" fill="#8c8c8c"/><rect x="21" y="807.89" width="5" height="1.5" fill="#8c8c8c"/><rect x="2" y="822.35" width="24" height="1.5" fill="#8c8c8c"/><rect x="21" y="836.81" width="5" height="1.5" fill="#8c8c8c"/><rect x="21" y="851.26" width="5" height="1.5" fill="#8c8c8c"/><rect x="21" y="865.72" width="5" height="1.5" fill="#8c8c8c"/><rect x="21" y="880.17" width="5" height="1.5" fill="#8c8c8c"/><rect x="2" y="894.63" width="24" height="1.5" fill="#8c8c8c"/><rect x="21" y="909.09" width="5" height="1.5" fill="#8c8c8c"/><rect x="21" y="923.54" width="5" height="1.5" fill="#8c8c8c"/><rect x="21" y="938.00" width="5" height="1.5" fill="#8c8c8c"/><rect x="21" y="952.45" width="5" height="1.5" fill="#8c8c8c"/><rect x="2" y="966.91" width="24" height="1.5" fill="#8c8c8c"/><rect x="21" y="981.37" width="5" height="1.5" fill="#8c8c8c"/><rect x="21" y="995.82" width="5" height="1.5" fill="#8c8c8c"/><rect x="21" y="1010.28" width="5" height="1.5" fill="#8c8c8c"/><rect x="21" y="1024.73" width="5" height="1.5" fill="#8c8c8c"/><rect x="2" y="1039.19" width="24" height="1.5" fill="#8c8c8c"/><rect x="21" y="1053.65" width="5" height="1.5" fill="#8c8c8c"/><rect x="21" y="1068.10" width="5" height="1.5" fill="#8c8c8c"/><rect x="21" y="1082.56" width="5" height="1.5" fill="#8c8c8c"/><rect x="21" y="1097.01" width="5" height="1.5" fill="#8c8c8c"/><rect x="2" y="1111.47" width="24" height="1.5" fill="#8c8c8c"/><rect x="21" y="1125.93" width="5" height="1.5" fill="#8c8c8c"/><rect x="21" y="1140.38" width="5" height="1.5" fill="#8c8c8c"/><rect x="21" y="1154.84" width="5" height="1.5" fill="#8c8c8c"/><rect x="21" y="1169.29" width="5" height="1.5" fill="#8c8c8c"/><rect x="2" y="1183.75" width="24" height="1.5" fill="#8c8c8c"/><rect x="21" y="1198.21" width="5" height="1.5" fill="#8c8c8c"/><rect x="21" y="1212.66" width="5" height="1.5" fill="#8c8c8c"/><rect x="21" y="1227.12" width="5" height="1.5" fill="#8c8c8c"/><rect x="21" y="1241.57" width="5" height="1.5" fill="#8c8c8c"/><rect x="2" y="1256.03" width="24" height="1.5" fill="#8c8c8c"/><rect x="21" y="1270.49" width="5" height="1.5" fill="#8c8c8c"/><rect x="21" y="1284.94" width="5" height="1.5" fill="#8c8c8c"/><rect x="21" y="1299.40" width="5" height="1.5" fill="#8c8c8c"/><rect x="21" y="1313.85" width="5" height="1.5" fill="#8c8c8c"/><rect x="2" y="1328.31" width="24" height="1.5" fill="#8c8c8c"/><rect x="21" y="1342.77" width="5" height="1.5" fill="#8c8c8c"/><rect x="21" y="1357.22" width="5" height="1.5" fill="#8c8c8c"/><rect x="21" y="1371.68" width="5" height="1.5" fill="#8c8c8c"/><rect x="21" y="1386.13" width="5" height="1.5" fill="#8c8c8c"/><g font-family="Liberation Sans, sans-serif" font-size="16.2" fill="#b6b6b6"><text x="3.4" y="-27.5">2</text><text x="3.4" y="-9.9">0</text><text x="3.4" y="7.7">0</text><text x="3.4" y="44.8">1</text><text x="3.4" y="62.4">0</text><text x="3.4" y="80.0">0</text><text x="3.4" y="117.1">0</text><text x="3.4" y="189.4">1</text><text x="3.4" y="207.0">0</text><text x="3.4" y="224.6">0</text><text x="3.4" y="261.7">2</text><text x="3.4" y="279.3">0</text><text x="3.4" y="296.9">0</text><text x="3.4" y="333.9">3</text><text x="3.4" y="351.5">0</text><text x="3.4" y="369.1">0</text><text x="3.4" y="406.2">4</text><text x="3.4" y="423.8">0</text><text x="3.4" y="441.4">0</text><text x="3.4" y="478.5">5</text><text x="3.4" y="496.1">0</text><text x="3.4" y="513.7">0</text><text x="3.4" y="550.8">6</text><text x="3.4" y="568.4">0</text><text x="3.4" y="586.0">0</text><text x="3.4" y="623.1">7</text><text x="3.4" y="640.7">0</text><text x="3.4" y="658.3">0</text><text x="3.4" y="695.3">8</text><text x="3.4" y="712.9">0</text><text x="3.4" y="730.5">0</text><text x="3.4" y="767.6">9</text><text x="3.4" y="785.2">0</text><text x="3.4" y="802.8">0</text><text x="3.4" y="839.9">1</text><text x="3.4" y="856.1">0</text><text x="3.4" y="872.3">0</text><text x="3.4" y="888.5">0</text><text x="3.4" y="912.2">1</text><text x="3.4" y="928.4">1</text><text x="3.4" y="944.6">0</text><text x="3.4" y="960.8">0</text><text x="3.4" y="984.5">1</text><text x="3.4" y="1000.7">2</text><text x="3.4" y="1016.9">0</text><text x="3.4" y="1033.1">0</text><text x="3.4" y="1056.7">1</text><text x="3.4" y="1072.9">3</text><text x="3.4" y="1089.1">0</text><text x="3.4" y="1105.3">0</text><text x="3.4" y="1129.0">1</text><text x="3.4" y="1145.2">4</text><text x="3.4" y="1161.4">0</text><text x="3.4" y="1177.6">0</text><text x="3.4" y="1201.3">1</text><text x="3.4" y="1217.5">5</text><text x="3.4" y="1233.7">0</text><text x="3.4" y="1249.9">0</text><text x="3.4" y="1273.6">1</text><text x="3.4" y="1289.8">6</text><text x="3.4" y="1306.0">0</text><text x="3.4" y="1322.2">0</text><text x="3.4" y="1345.9">1</text><text x="3.4" y="1362.1">7</text><text x="3.4" y="1378.3">0</text><text x="3.4" y="1394.5">0</text></g></svg>
<div style="left:0px;top:135px;width:1px;height:1380px;background:#404040;"></div>
<div style="left:163px;top:257.6px;width:1851px;height:1157px;background:#ffffff;"></div>
<svg style="left:0;top:0" width="2560" height="1542" viewBox="0 0 2560 1542"><defs>
<linearGradient id="jg" gradientUnits="userSpaceOnUse" x1="0" y1="610" x2="0" y2="1330">
<stop offset="0" stop-color="#2a2d40"/><stop offset="0.3" stop-color="#272b3d"/><stop offset="0.65" stop-color="#222737"/><stop offset="1" stop-color="#202534"/>
</linearGradient>
<linearGradient id="sg" x1="0" y1="0" x2="0" y2="1">
<stop offset="0" stop-color="#f1f1f7"/><stop offset="0.5" stop-color="#ebebf3"/><stop offset="1" stop-color="#e4e5ee"/>
</linearGradient>
<filter id="jb" x="-5%" y="-5%" width="110%" height="110%"><feGaussianBlur stdDeviation="6"/></filter>
</defs>
<path d="M922 706 C950 718 985 725 1010 724.5 C1040 724 1065 716 1084 705 L1075 760 L1050 880 L1030 965 L1006 1077 L1006 1115 L1024 1277 L965 1277 L988 1110 L988 1072 L969 965 L951 844 L935 760 Z" fill="url(#sg)"/>
<path d="M922 712 C950 730 980 737 1003 737 C1032 737 1062 727 1084 710" fill="none" stroke="#fbfbfd" stroke-width="9"/>
<path d="M927 727 C952 739 980 743.8 1003 743.5 C1032 743 1060 736 1079 725.5" fill="none" stroke="#d9d9e6" stroke-width="1.5"/>
<path d="M960 1276 H1026 L1030 1329.5 H958 Z" fill="#181c2b"/>
<path d="M962 1277 H1024 V1280 H962 Z" fill="#15182a"/>
<clipPath id="jc"><path d="M918 619.2 C912 630 905 638 899 642.5 C890 649 880 655 869.5 660 L814.5 683.5 L764.7 707.2 L722.3 728.4 C717 731 714 733 712.3 734.6 C709 739 707 743 704.8 747 C702 755 700 762 698.6 769.5 L691.1 807 L684.9 844.3 L677.4 894.2 L671.2 944 L667 965 L661.5 1015 L658.7 1065 L657.5 1120 L657.5 1329.5 L961.6 1329.5 L969.1 1277 L974.1 1239 L981.6 1164.5 L986.6 1104.6 L988 1080 L987.8 1072.2 L979.1 1027.3 L969.1 965 L961.6 906.7 L951.7 844.3 L939.2 774.5 L930.5 734.6 L924.2 707.2 C920 695 918.3 688 918 679.8 C917 665 917 655 917.2 644.9 Z"/><path d="M1074.2 610 C1076 616 1082 619 1087.2 622.4 C1094 629 1100 636 1107.2 641.1 C1116 647.5 1125 653 1134.6 657.3 L1179.5 679.8 L1229.3 707.2 L1266.7 729.6 L1283 739.6 C1288 744 1291 749 1294.1 754.6 C1298 764 1301 774 1304.1 784.5 C1308 796 1311 808 1312.9 819.4 L1317.8 869.3 L1322.8 919.1 L1326.6 965 L1330.3 1039.8 L1331.6 1139.5 L1330.3 1239.3 L1327.8 1329.5 L1028.6 1329.5 L1023.6 1276.7 L1017.4 1214.3 L1009.9 1164.5 L1006.2 1114.6 L1006.2 1077.2 L1017.4 1027.3 L1029.9 965 L1036.1 931.6 L1044.8 881.7 L1054.8 831.9 L1064.8 782 L1074.7 734.6 L1082.2 702.2 C1086 692 1088.5 686 1089.7 679.8 C1091 672 1091.5 666 1091 659.8 C1090.5 654 1089 649 1087.2 644.9 C1082 640 1079 636 1077.2 632.4 C1075 625 1074 617 1074.2 610 Z"/></clipPath>
<g fill="url(#jg)">
<path d="M918 619.2 C912 630 905 638 899 642.5 C890 649 880 655 869.5 660 L814.5 683.5 L764.7 707.2 L722.3 728.4 C717 731 714 733 712.3 734.6 C709 739 707 743 704.8 747 C702 755 700 762 698.6 769.5 L691.1 807 L684.9 844.3 L677.4 894.2 L671.2 944 L667 965 L661.5 1015 L658.7 1065 L657.5 1120 L657.5 1329.5 L961.6 1329.5 L969.1 1277 L974.1 1239 L981.6 1164.5 L986.6 1104.6 L988 1080 L987.8 1072.2 L979.1 1027.3 L969.1 965 L961.6 906.7 L951.7 844.3 L939.2 774.5 L930.5 734.6 L924.2 707.2 C920 695 918.3 688 918 679.8 C917 665 917 655 917.2 644.9 Z"/><path d="M1074.2 610 C1076 616 1082 619 1087.2 622.4 C1094 629 1100 636 1107.2 641.1 C1116 647.5 1125 653 1134.6 657.3 L1179.5 679.8 L1229.3 707.2 L1266.7 729.6 L1283 739.6 C1288 744 1291 749 1294.1 754.6 C1298 764 1301 774 1304.1 784.5 C1308 796 1311 808 1312.9 819.4 L1317.8 869.3 L1322.8 919.1 L1326.6 965 L1330.3 1039.8 L1331.6 1139.5 L1330.3 1239.3 L1327.8 1329.5 L1028.6 1329.5 L1023.6 1276.7 L1017.4 1214.3 L1009.9 1164.5 L1006.2 1114.6 L1006.2 1077.2 L1017.4 1027.3 L1029.9 965 L1036.1 931.6 L1044.8 881.7 L1054.8 831.9 L1064.8 782 L1074.7 734.6 L1082.2 702.2 C1086 692 1088.5 686 1089.7 679.8 C1091 672 1091.5 666 1091 659.8 C1090.5 654 1089 649 1087.2 644.9 C1082 640 1079 636 1077.2 632.4 C1075 625 1074 617 1074.2 610 Z"/></g>
<g clip-path="url(#jc)">
<path d="M712 735 L722 729 C740 770 758 830 766 900 L770 965 L776 1065 L776 1165 L770 1239 L763 1307 L766 1329.5 L657.5 1329.5 L657.5 1120 L661 1015 L665 965 L677 894 L691 807 L699 769 Z" fill="#141a2c" opacity="0.1"/>
<path d="M1290 745 L1282 740 C1262 790 1232 880 1217 965 L1209.5 1115 L1217 1214 L1222 1329.5 L1327.8 1329.5 L1331.6 1140 L1326.6 965 L1313 819 L1304 784 Z" fill="#141a2c" opacity="0.1"/>
<path d="M835.7 729.6 L929.2 965 L959.1 1027.3 L986.6 1074.7 L987.8 1072.2 L979.1 1027.3 L969.1 965 L951.7 844.3 L930.5 734.6 L924.2 707.2 L918 680 L866.5 711 Z" fill="url(#jg)"/>
<path d="M835.7 729.6 L929.2 965 L959.1 1027.3 L986.6 1074.7" fill="none" stroke="#12162a" stroke-width="1.6"/>
<path d="M835.7 729.6 L866.5 711 L845 698.5" fill="none" stroke="#0d101e" stroke-width="2.2"/>
<path d="M866.5 711 L918 681" fill="none" stroke="#13172a" stroke-width="1.2"/>
<path d="M1164.5 730.9 L1139.5 794 L1099.7 881.7 L1054.8 965 L1006.2 1077.2 L1017.4 1027.3 L1029.9 965 L1054.8 831.9 L1074.7 734.6 L1082.2 702.2 L1089.7 680 L1134.6 711 Z" fill="url(#jg)"/>
<path d="M1164.5 730.9 L1139.5 794 L1099.7 881.7 L1054.8 965 L1006.2 1077.2" fill="none" stroke="#12162a" stroke-width="1.6"/>
<path d="M1164.5 730.9 L1134.6 711 L1154.5 698.5" fill="none" stroke="#0d101e" stroke-width="2.2"/>
<path d="M1134.6 711 L1090 682" fill="none" stroke="#13172a" stroke-width="1.2"/>
<path d="M1107.2 868 L1219.4 851.8 L1219.4 879.2 L1097.2 896.7" fill="#262a3c" stroke="#131a2c" stroke-width="1.2"/>
<path d="M767.2 1236.8 H833.2 L829.5 1286.6 C828 1296 824 1300 819.5 1301.6 L763.4 1306.6" fill="#222737" stroke="#10141f" stroke-width="1.5"/>
<path d="M767.2 1241 H832" fill="none" stroke="#10131f" stroke-width="1"/>
<path d="M1157 1230.5 L1218.1 1233 L1221.9 1300.3 C1200 1300 1188 1299 1179.5 1296.6 C1171 1293 1166 1288 1164.5 1281.6 Z" fill="#222737" stroke="#10141f" stroke-width="1.5"/>
<path d="M1158 1235 L1218 1237.5" fill="none" stroke="#10131f" stroke-width="1"/>
<path d="M837 965 L824.5 1237" fill="none" stroke="#2c3145" stroke-width="1"/>
<path d="M1172 965 L1169.5 1229" fill="none" stroke="#2c3145" stroke-width="1"/>
<path d="M722 729 C740 770 758 830 766 900 L770 965 L776 1065 L776 1165 L770 1239 L763 1307" fill="none" stroke="#141829" stroke-width="1.5"/>
<path d="M1282 740 C1262 790 1232 880 1217 965 L1209.5 1115 L1217 1214 L1222 1329.5" fill="none" stroke="#141829" stroke-width="1.5"/>
<circle cx="965.9" cy="1114.6" r="11.2" fill="#0c0e17"/><circle cx="965.9" cy="1114.6" r="9.6" fill="none" stroke="#3b3f4e" stroke-width="1.3"/><circle cx="965.9" cy="1114.6" r="6" fill="#141722"/>
<circle cx="963.9" cy="1112.6" r="0.9" fill="#3a3f52"/>
<circle cx="967.9" cy="1112.6" r="0.9" fill="#3a3f52"/>
<circle cx="963.9" cy="1116.6" r="0.9" fill="#3a3f52"/>
<circle cx="967.9" cy="1116.6" r="0.9" fill="#3a3f52"/>
<circle cx="951.2" cy="1258" r="11.2" fill="#0c0e17"/><circle cx="951.2" cy="1258" r="9.6" fill="none" stroke="#3b3f4e" stroke-width="1.3"/><circle cx="951.2" cy="1258" r="6" fill="#141722"/>
<circle cx="949.2" cy="1256" r="0.9" fill="#3a3f52"/>
<circle cx="953.2" cy="1256" r="0.9" fill="#3a3f52"/>
<circle cx="949.2" cy="1260" r="0.9" fill="#3a3f52"/>
<circle cx="953.2" cy="1260" r="0.9" fill="#3a3f52"/>
<path d="M1024 1096.5 L1053.6 1099" stroke="#0b0d16" stroke-width="2.5"/><circle cx="1025.5" cy="1096.5" r="2" fill="#d8dbe6"/>
<path d="M1039 1242 L1068.5 1244.5" stroke="#0b0d16" stroke-width="2.5"/><circle cx="1040.5" cy="1242" r="1.6" fill="#b8bccb"/>
</g></svg>
<svg style="left:0;top:0" width="2560" height="1542" viewBox="0 0 2560 1542"><rect x="657" y="605" width="675" height="726" fill="none" stroke="#4f8cf0" stroke-width="1.6"/><rect x="650.8" y="598.8" width="12.4" height="12.4" fill="#f1f1f1" stroke="#4f8cf0" stroke-width="1.6"/><rect x="988.3" y="598.8" width="12.4" height="12.4" fill="#f1f1f1" stroke="#4f8cf0" stroke-width="1.6"/><rect x="1325.8" y="598.8" width="12.4" height="12.4" fill="#f1f1f1" stroke="#4f8cf0" stroke-width="1.6"/><rect x="650.8" y="961.8" width="12.4" height="12.4" fill="#f1f1f1" stroke="#4f8cf0" stroke-width="1.6"/><rect x="1325.8" y="961.8" width="12.4" height="12.4" fill="#f1f1f1" stroke="#4f8cf0" stroke-width="1.6"/><rect x="650.8" y="1324.8" width="12.4" height="12.4" fill="#f1f1f1" stroke="#4f8cf0" stroke-width="1.6"/><rect x="988.3" y="1324.8" width="12.4" height="12.4" fill="#f1f1f1" stroke="#4f8cf0" stroke-width="1.6"/><rect x="1325.8" y="1324.8" width="12.4" height="12.4" fill="#f1f1f1" stroke="#4f8cf0" stroke-width="1.6"/></svg>
<div style="left:2px;top:240px;width:56.7px;height:1068px;background:#535353;box-shadow:2px 3px 6px rgba(0,0,0,0.45);border-radius:4px 4px 0 0;"></div>
<div style="left:2px;top:240px;width:56.7px;height:20.5px;background:#424242;border-radius:4px 4px 0 0;"></div>
<div style="left:2px;top:260.5px;width:56.7px;height:1px;background:#383838;"></div>
<svg style="left:13px;top:246.5px;" width="12" height="9" viewBox="0 0 12 9"><path d="M1 1 L4.5 4.5 L1 8 M6.5 1 L10 4.5 L6.5 8" fill="none" stroke="#d0d0d0" stroke-width="1.3"/></svg>
<svg style="left:40px;top:246.5px;" width="9" height="9" viewBox="0 0 9 9"><path d="M0.8 0.8 L8.2 8.2 M8.2 0.8 L0.8 8.2" fill="none" stroke="#d0d0d0" stroke-width="1.5"/></svg>
<div style="left:15px;top:265px;width:29px;height:6px;background:repeating-linear-gradient(90deg,#3f3f3f 0 1px,transparent 1px 3px);"></div>
<div style="left:6px;top:286px;width:48px;height:37.5px;background:#363636;border:1px solid #5e5e5e;border-radius:4px;"></div>
<svg style="left:16.0px;top:291.0px;" width="28" height="28" viewBox="0 0 28 28"><g transform="translate(3,3) scale(0.917)"><path d="M12 0.5 L16 5.5 H13 V11 H18.5 V8 L23.5 12 L18.5 16 V13 H13 V18.5 H16 L12 23.5 L8 18.5 H11 V13 H5.5 V16 L0.5 12 L5.5 8 V11 H11 V5.5 H8 Z" fill="#dddddd"/></g></svg>
<svg style="left:45px;top:314px;" width="5" height="5" viewBox="0 0 5 5"><path d="M5 0 V5 H0 Z" fill="#bdbdbd"/></svg>
<svg style="left:16.0px;top:330.0px;" width="28" height="28" viewBox="0 0 28 28"><rect x="3" y="5" width="22" height="18" fill="none" stroke="#dddddd" stroke-width="1.6" stroke-dasharray="5 3.5"/></svg>
<svg style="left:45px;top:353px;" width="5" height="5" viewBox="0 0 5 5"><path d="M5 0 V5 H0 Z" fill="#bdbdbd"/></svg>
<svg style="left:16.0px;top:369.0px;" width="28" height="28" viewBox="0 0 28 28"><ellipse cx="14.5" cy="11" rx="11" ry="7.5" fill="none" stroke="#dddddd" stroke-width="1.6" transform="rotate(-12 14.5 11)"/><circle cx="7.5" cy="18" r="2.6" fill="none" stroke="#dddddd" stroke-width="1.4"/><path d="M8 20.5 C11 22 10 25 7.5 25.5" fill="none" stroke="#dddddd" stroke-width="1.4"/></svg>
<svg style="left:45px;top:392px;" width="5" height="5" viewBox="0 0 5 5"><path d="M5 0 V5 H0 Z" fill="#bdbdbd"/></svg>
<svg style="left:16.0px;top:408.0px;" width="28" height="28" viewBox="0 0 28 28"><path d="M4 24 L17 11" stroke="#dddddd" stroke-width="4.2" stroke-linecap="round"/><path d="M16.5 8.5 L19.5 11.5" stroke="#535353" stroke-width="1"/><path d="M10 2 L11 5 L14 6 L11 7 L10 10 L9 7 L6 6 L9 5 Z M23.5 2.5 L24.5 5.5 L27.5 6.5 L24.5 7.5 L23.5 10.5 L22.5 7.5 L19.5 6.5 L22.5 5.5 Z M23.5 13 L24.2 15.3 L26.5 16 L24.2 16.7 L23.5 19 L22.8 16.7 L20.5 16 L22.8 15.3 Z" fill="#dddddd"/></svg>
<svg style="left:45px;top:431px;" width="5" height="5" viewBox="0 0 5 5"><path d="M5 0 V5 H0 Z" fill="#bdbdbd"/></svg>
<svg style="left:16.0px;top:447.0px;" width="28" height="28" viewBox="0 0 28 28"><path d="M7.5 1 V19.5 H27 M1 7.5 H5 M9.5 7.5 H21.5 V18 M21.5 22 V27 " fill="none" stroke="#dddddd" stroke-width="2"/></svg>
<svg style="left:45px;top:470px;" width="5" height="5" viewBox="0 0 5 5"><path d="M5 0 V5 H0 Z" fill="#bdbdbd"/></svg>
<svg style="left:16.0px;top:486.0px;" width="28" height="28" viewBox="0 0 28 28"><rect x="3" y="5" width="22" height="19" fill="none" stroke="#dddddd" stroke-width="1.8"/><path d="M3 5 L25 24 M25 5 L3 24" stroke="#dddddd" stroke-width="1.6"/><rect x="1.5" y="3.5" width="3.5" height="3.5" fill="#dddddd"/><rect x="23" y="3.5" width="3.5" height="3.5" fill="#dddddd"/><rect x="1.5" y="22" width="3.5" height="3.5" fill="#dddddd"/><rect x="23" y="22" width="3.5" height="3.5" fill="#dddddd"/></svg>
<svg style="left:16.0px;top:525.0px;" width="28" height="28" viewBox="0 0 28 28"><path d="M5 24 L5 21 L15 11 L18 14 L8 24 Z" fill="none" stroke="#dddddd" stroke-width="1.6" stroke-linejoin="round"/><path d="M14 8 L21 15 L23 13 L21 11 C25 8 26 5 24.5 3.5 C23 2 20 3 17 7 L16 6 Z" fill="#dddddd"/></svg>
<svg style="left:45px;top:548px;" width="5" height="5" viewBox="0 0 5 5"><path d="M5 0 V5 H0 Z" fill="#bdbdbd"/></svg>
<svg style="left:16.0px;top:564.0px;" width="28" height="28" viewBox="0 0 28 28"><g transform="rotate(-38 14 14)"><rect x="1" y="9" width="26" height="10.5" rx="2.5" fill="#dddddd"/><rect x="9.5" y="9" width="9" height="10.5" fill="#535353"/><g fill="#dddddd"><circle cx="11.5" cy="11.5" r="1"/><circle cx="14" cy="11.5" r="1"/><circle cx="16.5" cy="11.5" r="1"/><circle cx="11.5" cy="14.2" r="1"/><circle cx="14" cy="14.2" r="1"/><circle cx="16.5" cy="14.2" r="1"/><circle cx="11.5" cy="17" r="1"/><circle cx="14" cy="17" r="1"/><circle cx="16.5" cy="17" r="1"/></g></g></svg>
<svg style="left:45px;top:587px;" width="5" height="5" viewBox="0 0 5 5"><path d="M5 0 V5 H0 Z" fill="#bdbdbd"/></svg>
<svg style="left:16.0px;top:603.0px;" width="28" height="28" viewBox="0 0 28 28"><path d="M25 2 C20 6 14 13 11.5 17 L14.5 19.5 C18 15 23 8 25 2 Z" fill="#dddddd"/><path d="M10.5 18 C7 18 6.5 22 3.5 24 C7 26 13 25 13.5 20.5 Z" fill="#dddddd"/></svg>
<svg style="left:45px;top:626px;" width="5" height="5" viewBox="0 0 5 5"><path d="M5 0 V5 H0 Z" fill="#bdbdbd"/></svg>
<svg style="left:16.0px;top:642.0px;" width="28" height="28" viewBox="0 0 28 28"><circle cx="14" cy="7" r="4.8" fill="#dddddd"/><path d="M12 10 H16 L17 17 H11 Z" fill="#dddddd"/><rect x="4" y="16.5" width="20" height="5" rx="1" fill="#dddddd"/><rect x="4" y="23.5" width="20" height="1.8" fill="#dddddd"/></svg>
<svg style="left:45px;top:665px;" width="5" height="5" viewBox="0 0 5 5"><path d="M5 0 V5 H0 Z" fill="#bdbdbd"/></svg>
<svg style="left:16.0px;top:681.0px;" width="28" height="28" viewBox="0 0 28 28"><path d="M26 2 C22 6 17 13 15 17 L17.5 19 C20.5 15 24.5 8 26 2 Z" fill="#dddddd"/><path d="M14 18 C11 18 10.5 22 7.5 24 C11 26 16.5 25 17 20.5 Z" fill="#dddddd"/><path d="M5 9 C8 5.5 12 5 15 7" fill="none" stroke="#dddddd" stroke-width="1.4"/><path d="M0.5 9.5 L6.5 5.5 L7 11 Z" fill="#dddddd"/><circle cx="22" cy="17" r="0.8" fill="#dddddd"/><circle cx="21" cy="20" r="0.8" fill="#dddddd"/><circle cx="19" cy="22.5" r="0.8" fill="#dddddd"/></svg>
<svg style="left:45px;top:704px;" width="5" height="5" viewBox="0 0 5 5"><path d="M5 0 V5 H0 Z" fill="#bdbdbd"/></svg>
<svg style="left:16.0px;top:720.0px;" width="28" height="28" viewBox="0 0 28 28"><path d="M15.5 4 L25 10 L17.5 18.5 L8 13 Z" fill="#dddddd"/><path d="M8 13 L3.5 18.5 L9 23 H26 M9 23 L17.5 18.5" fill="none" stroke="#dddddd" stroke-width="1.6" stroke-linejoin="round"/></svg>
<svg style="left:45px;top:743px;" width="5" height="5" viewBox="0 0 5 5"><path d="M5 0 V5 H0 Z" fill="#bdbdbd"/></svg>
<svg style="left:16.0px;top:759.0px;" width="28" height="28" viewBox="0 0 28 28"><defs><linearGradient id="tg" x1="0" x2="1"><stop offset="0" stop-color="#2a2a2a"/><stop offset="1" stop-color="#e8e8e8"/></linearGradient></defs><rect x="3" y="5" width="22" height="18" fill="url(#tg)" stroke="#dddddd" stroke-width="1.6"/></svg>
<svg style="left:45px;top:782px;" width="5" height="5" viewBox="0 0 5 5"><path d="M5 0 V5 H0 Z" fill="#bdbdbd"/></svg>
<svg style="left:16.0px;top:798.0px;" width="28" height="28" viewBox="0 0 28 28"><path d="M14 2.5 L23 24 H5 Z" fill="#dddddd"/></svg>
<svg style="left:45px;top:821px;" width="5" height="5" viewBox="0 0 5 5"><path d="M5 0 V5 H0 Z" fill="#bdbdbd"/></svg>
<svg style="left:16.0px;top:837.0px;" width="28" height="28" viewBox="0 0 28 28"><path d="M14 3 C20 2.5 26 6 26 13 C26 19 22 24.5 15 24.5 C8 25 2.5 21 2.5 14 C2.5 8 7 3.5 14 3 Z" fill="#dddddd"/><circle cx="8" cy="9" r="0.9" fill="#535353"/><circle cx="12" cy="7" r="0.9" fill="#535353"/><circle cx="16" cy="8" r="0.9" fill="#535353"/><circle cx="20" cy="10" r="0.9" fill="#535353"/><circle cx="6" cy="13" r="0.9" fill="#535353"/><circle cx="10" cy="12" r="0.9" fill="#535353"/><circle cx="14" cy="11" r="0.9" fill="#535353"/><circle cx="18" cy="13" r="0.9" fill="#535353"/><circle cx="22" cy="14" r="0.9" fill="#535353"/><circle cx="8" cy="16" r="0.9" fill="#535353"/><circle cx="12" cy="15" r="0.9" fill="#535353"/><circle cx="16" cy="16" r="0.9" fill="#535353"/><circle cx="20" cy="17" r="0.9" fill="#535353"/><circle cx="7" cy="19" r="0.9" fill="#535353"/><circle cx="11" cy="19" r="0.9" fill="#535353"/><circle cx="15" cy="20" r="0.9" fill="#535353"/><circle cx="19" cy="20" r="0.9" fill="#535353"/><circle cx="10" cy="22" r="0.9" fill="#535353"/><circle cx="14" cy="23" r="0.9" fill="#535353"/><circle cx="17" cy="22" r="0.9" fill="#535353"/><circle cx="13" cy="18" r="0.9" fill="#535353"/><circle cx="9" cy="14" r="0.9" fill="#535353"/><circle cx="17" cy="10" r="0.9" fill="#535353"/><circle cx="21" cy="19" r="0.9" fill="#535353"/><circle cx="5" cy="16" r="0.9" fill="#535353"/></svg>
<svg style="left:45px;top:860px;" width="5" height="5" viewBox="0 0 5 5"><path d="M5 0 V5 H0 Z" fill="#bdbdbd"/></svg>
<svg style="left:16.0px;top:876.0px;" width="28" height="28" viewBox="0 0 28 28"><path d="M17 3 L25 11 L22.5 13.5 C21 19 17 22 5 24 C7 12 10 8 14.5 6 Z" fill="none" stroke="#dddddd" stroke-width="1.7" stroke-linejoin="round"/><path d="M5.5 23.5 L12.5 16" stroke="#dddddd" stroke-width="1.4"/><circle cx="13.5" cy="15" r="2" fill="#dddddd"/><path d="M16 2.5 L25.5 12" stroke="#dddddd" stroke-width="2.6"/></svg>
<svg style="left:45px;top:899px;" width="5" height="5" viewBox="0 0 5 5"><path d="M5 0 V5 H0 Z" fill="#bdbdbd"/></svg>
<svg style="left:16.0px;top:915.0px;" width="28" height="28" viewBox="0 0 28 28"><path d="M4 3.5 H24 V9 H22.3 C22 6.5 21 5.5 18.5 5.5 H15.5 V21 C15.5 22.3 16.2 22.8 18.5 23 V24.5 H9.5 V23 C11.8 22.8 12.5 22.3 12.5 21 V5.5 H9.5 C7 5.5 6 6.5 5.7 9 H4 Z" fill="#dddddd"/></svg>
<svg style="left:45px;top:938px;" width="5" height="5" viewBox="0 0 5 5"><path d="M5 0 V5 H0 Z" fill="#bdbdbd"/></svg>
<svg style="left:16.0px;top:954.0px;" width="28" height="28" viewBox="0 0 28 28"><path d="M8 2 L8 22 L12.5 17.5 L16 25 L19 23.5 L15.5 16.5 L22 16.5 Z" fill="#0a0a0a" stroke="#dddddd" stroke-width="1.5" stroke-linejoin="round"/></svg>
<svg style="left:45px;top:977px;" width="5" height="5" viewBox="0 0 5 5"><path d="M5 0 V5 H0 Z" fill="#bdbdbd"/></svg>
<svg style="left:16.0px;top:993.0px;" width="28" height="28" viewBox="0 0 28 28"><rect x="3" y="5.5" width="22" height="17" fill="#767676" stroke="#dddddd" stroke-width="1.6"/></svg>
<svg style="left:45px;top:1016px;" width="5" height="5" viewBox="0 0 5 5"><path d="M5 0 V5 H0 Z" fill="#bdbdbd"/></svg>
<svg style="left:16.0px;top:1032.0px;" width="28" height="28" viewBox="0 0 28 28"><path d="M9 13 V6.5 C9 5 11.3 5 11.3 6.5 V4.5 C11.3 3 13.6 3 13.6 4.5 V4 C13.6 2.5 16 2.5 16 4 V5.5 C16 4 18.3 4 18.3 5.5 V12 H18.5 V9 C18.5 7.5 20.8 7.5 20.8 9 V17 C20.8 22 18 25 14.5 25 C11 25 9.5 23.5 7.5 20.5 L3.5 15 C2.5 13.5 4.5 12 6 13.5 L9 16.5 Z" fill="#dddddd"/><path d="M11.3 6 V12 M13.7 4.5 V12 M16 5 V12" stroke="#535353" stroke-width="0.9"/></svg>
<svg style="left:45px;top:1055px;" width="5" height="5" viewBox="0 0 5 5"><path d="M5 0 V5 H0 Z" fill="#bdbdbd"/></svg>
<svg style="left:16.0px;top:1071.0px;" width="28" height="28" viewBox="0 0 28 28"><circle cx="11.5" cy="11.5" r="8.8" fill="none" stroke="#dddddd" stroke-width="1.8"/><path d="M18 18 L25.5 25.5" stroke="#dddddd" stroke-width="3" stroke-linecap="round"/><path d="M11 6.5 C14 6.5 16 8.5 16.5 11" fill="none" stroke="#dddddd" stroke-width="1.4"/></svg>
<svg style="left:16.0px;top:1110.0px;" width="28" height="28" viewBox="0 0 28 28"><circle cx="5" cy="14" r="2.7" fill="#dddddd"/><circle cx="14" cy="14" r="2.7" fill="#dddddd"/><circle cx="23" cy="14" r="2.7" fill="#dddddd"/></svg>
<svg style="left:45px;top:1133px;" width="5" height="5" viewBox="0 0 5 5"><path d="M5 0 V5 H0 Z" fill="#bdbdbd"/></svg>
<div style="left:14px;top:1160px;width:10.5px;height:10.5px;background:#dcdcdc;"></div>
<div style="left:8px;top:1153px;width:11.5px;height:11.5px;background:#111;border:1.5px solid #dcdcdc;"></div>
<svg style="left:33px;top:1152px;" width="18" height="17" viewBox="0 0 18 17"><path d="M5 4 H11.5 V13" fill="none" stroke="#dddddd" stroke-width="1.8"/><path d="M0.5 4 L6 0.5 V7.5 Z M11.5 16.5 L8 11.5 H15 Z" fill="#dddddd"/></svg>
<div style="left:22px;top:1190.7px;width:30px;height:29.2px;background:#ffffff;border:1px solid #3a3a3a;"></div>
<div style="left:7.8px;top:1176.2px;width:29px;height:28.6px;background:#322d2c;border:2px solid #ffffff;outline:1px solid #3a3a3a;"></div>
<svg style="left:16.5px;top:1236.5px;" width="26" height="20" viewBox="0 0 26 20"><rect x="0.8" y="0.8" width="24.4" height="18.4" fill="none" stroke="#dddddd" stroke-width="1.4"/><circle cx="13" cy="10" r="6" fill="none" stroke="#dddddd" stroke-width="1.4" stroke-dasharray="1.6 1.6"/></svg>
<svg style="left:16.5px;top:1275px;" width="26" height="21" viewBox="0 0 26 21"><rect x="0.8" y="7.5" width="16.5" height="12.5" fill="none" stroke="#dddddd" stroke-width="1.5"/><rect x="8.5" y="0.8" width="16.5" height="12.5" fill="#535353" stroke="#dddddd" stroke-width="1.5"/></svg>
<svg style="left:45px;top:1294px;" width="5" height="5" viewBox="0 0 5 5"><path d="M5 0 V5 H0 Z" fill="#bdbdbd"/></svg>
<div style="left:1701.2px;top:249px;width:377.29999999999995px;height:822px;background:#535353;box-shadow:0 2px 8px 1px rgba(0,0,0,0.5);border-radius:5px 5px 0 0;"></div>
<div style="left:1701.2px;top:249px;width:377.29999999999995px;height:20px;background:#424242;border-radius:5px 5px 0 0;"></div>
<div style="left:1701.2px;top:268.3px;width:377.29999999999995px;height:1.2px;background:#383838;"></div>
<svg style="left:2034.5px;top:256.5px;" width="11" height="9" viewBox="0 0 11 9"><path d="M4.5 0.8 L1 4.3 L4.5 7.8 M9.5 0.8 L6 4.3 L9.5 7.8" fill="none" stroke="#d4d4d4" stroke-width="1.3"/></svg>
<svg style="left:2060px;top:256px;" width="10" height="10" viewBox="0 0 10 10"><path d="M0.8 0.8 L8.8 8.8 M8.8 0.8 L0.8 8.8" fill="none" stroke="#d4d4d4" stroke-width="1.6"/></svg>
<div style="left:1701.2px;top:269.5px;width:377.29999999999995px;height:42px;background:#424242;"></div>
<div style="left:1701.2px;top:311px;width:377.29999999999995px;height:1px;background:#3a3a3a;"></div>
<div style="left:1701.2px;top:269.5px;width:59.5px;height:42.5px;background:#535353;"></div>
<div style="left:1760.7px;top:269.5px;width:1px;height:41.5px;background:#3a3a3a;"></div>
<span class="t" style="left:1716.7px;top:277.45px;font-size:17.5px;line-height:23.5px;color:#e8e8e8;letter-spacing:-0.20px;">문자</span>
<svg style="left:2054.5px;top:285px;" width="16" height="12" viewBox="0 0 16 12"><rect x="0" y="0.0" width="15.5" height="1.6" fill="#cfcfcf"/><rect x="0" y="3.2" width="15.5" height="1.6" fill="#cfcfcf"/><rect x="0" y="6.4" width="15.5" height="1.6" fill="#cfcfcf"/><rect x="0" y="9.600000000000001" width="15.5" height="1.6" fill="#cfcfcf"/></svg>
<div style="left:1709.7px;top:332.5px;width:178px;height:26.5px;background:#434343;border:1px solid #686868;border-radius:4px;"></div><div style="left:1865.0px;top:332.5px;width:1px;height:26.5px;background:#686868;"></div>
<span class="t" style="left:1713px;top:335.45px;font-size:16.5px;line-height:22.5px;color:#f4f4f4;transform:scaleX(0.9328);transform-origin:0 50%;">a고딕12</span>
<svg style="left:1871.5px;top:344.75px;" width="11.0" height="6.5" viewBox="0 0 11.0 6.5"><path d="M1 1 L5.5 5.5 L10.0 1" fill="none" stroke="#c4c4c4" stroke-width="1.25"/></svg>
<div style="left:1915px;top:332.5px;width:109px;height:26.5px;background:#434343;border:1px solid #686868;border-radius:4px;"></div><div style="left:2001.2px;top:332.5px;width:1px;height:26.5px;background:#686868;"></div>
<span class="t" style="left:1924.5px;top:333.75px;font-size:16.5px;line-height:22.5px;color:#f4f4f4;">-</span>
<svg style="left:2008.0px;top:344.75px;" width="11.0" height="6.5" viewBox="0 0 11.0 6.5"><path d="M1 1 L5.5 5.5 L10.0 1" fill="none" stroke="#c4c4c4" stroke-width="1.25"/></svg>
<svg style="left:1709px;top:374px;" width="26" height="21" viewBox="0 0 26 21"><g class="sf" font-family="Liberation Serif, serif" fill="#dcdcdc"><text x="9" y="20" font-size="27" font-weight="bold" textLength="16" lengthAdjust="spacingAndGlyphs">T</text><text x="0" y="20" font-size="13.5" font-weight="bold">T</text></g></svg>
<div style="left:1739.7px;top:371.7px;width:125px;height:26px;background:#434343;border:1px solid #686868;border-radius:4px;"></div><div style="left:1842.0px;top:371.7px;width:1px;height:26px;background:#686868;"></div>
<span class="t" style="left:1744px;top:373.25px;font-size:16.5px;line-height:22.5px;color:#f4f4f4;transform:scaleX(0.9943);transform-origin:0 50%;">10.23 pt</span>
<svg style="left:1849.0px;top:383.75px;" width="11.0" height="6.5" viewBox="0 0 11.0 6.5"><path d="M1 1 L5.5 5.5 L10.0 1" fill="none" stroke="#c4c4c4" stroke-width="1.25"/></svg>
<svg style="left:1876px;top:371px;" width="26" height="27" viewBox="0 0 26 27"><g fill="none" stroke="#dcdcdc" stroke-width="1.3"><path d="M11 11 L15.5 1.5 L20 11 M12.8 7.5 H18.2 M9 12.5 H23"/><path d="M11 24 L15.5 14.5 L20 24 M12.8 20.5 H18.2 M9 25.5 H23"/><path d="M4 12.5 V24"/></g><path d="M4 9.5 L6.8 14 H1.2 Z M4 27 L6.8 22.5 H1.2 Z" fill="#dcdcdc"/></svg>
<div style="left:1908px;top:371.7px;width:116px;height:26px;background:#434343;border:1px solid #686868;border-radius:4px;"></div><div style="left:2001.2px;top:371.7px;width:1px;height:26px;background:#686868;"></div>
<span class="t" style="left:1911.7px;top:374.95px;font-size:15.5px;line-height:21.5px;color:#f4f4f4;transform:scaleX(1.0040);transform-origin:0 50%;">(자동)</span>
<svg style="left:2008.0px;top:383.75px;" width="11.0" height="6.5" viewBox="0 0 11.0 6.5"><path d="M1 1 L5.5 5.5 L10.0 1" fill="none" stroke="#c4c4c4" stroke-width="1.25"/></svg>
<svg style="left:1707px;top:404px;" width="28" height="27" viewBox="0 0 28 27"><g fill="none" stroke="#dcdcdc" stroke-width="1.4"><path d="M1 3 L5.5 15 L10 3"/><path d="M16 2 L8 18"/><path d="M16.5 15 L21 3.5 L25.5 15 M18.2 11 H23.8"/><path d="M15 18 H27 M16 22.5 H27"/></g><path d="M13.5 22.5 L17.5 19.7 V25.3 Z" fill="#dcdcdc"/></svg>
<div style="left:1739.7px;top:404.7px;width:125px;height:26px;background:#434343;border:1px solid #686868;border-radius:4px;"></div><div style="left:1842.0px;top:404.7px;width:1px;height:26px;background:#686868;"></div>
<svg style="left:1849.0px;top:416.75px;" width="11.0" height="6.5" viewBox="0 0 11.0 6.5"><path d="M1 1 L5.5 5.5 L10.0 1" fill="none" stroke="#c4c4c4" stroke-width="1.25"/></svg>
<svg style="left:1876px;top:405px;" width="28" height="26" viewBox="0 0 28 26"><rect x="1.5" y="0.5" width="25" height="16.5" fill="#dcdcdc"/><g fill="none" stroke="#535353" stroke-width="1.7"><path d="M4 3 L8.5 14 L13 3"/><path d="M15 14 L19.5 3 L24 14 M16.8 10.5 H22.2"/></g><path d="M4 21.5 H24" stroke="#dcdcdc" stroke-width="1.4"/><path d="M1 21.5 L5 18.7 V24.3 Z M27 21.5 L23 18.7 V24.3 Z" fill="#dcdcdc"/></svg>
<div style="left:1908px;top:404.7px;width:116px;height:26px;background:#434343;border:1px solid #686868;border-radius:4px;"></div><div style="left:2001.2px;top:404.7px;width:1px;height:26px;background:#686868;"></div>
<span class="t" style="left:1911.7px;top:406.25px;font-size:16.5px;line-height:22.5px;color:#f4f4f4;">0</span>
<svg style="left:2008.0px;top:416.75px;" width="11.0" height="6.5" viewBox="0 0 11.0 6.5"><path d="M1 1 L5.5 5.5 L10.0 1" fill="none" stroke="#c4c4c4" stroke-width="1.25"/></svg>
<svg style="left:1710px;top:440px;" width="24" height="24" viewBox="0 0 24 24"><path d="M2.5 1 V15 M20.5 1 V15" stroke="#dcdcdc" stroke-width="1.2" stroke-dasharray="1.3 1.3"/><text x="4.5" y="13.5" font-size="14.5" fill="#dcdcdc" font-family="Noto Sans CJK JP, Noto Sans CJK KR, sans-serif">あ</text><path d="M1 20 H7 M22 20 H16" stroke="#dcdcdc" stroke-width="1.3"/><path d="M10 20 L6.5 17.5 V22.5 Z M13 20 L16.5 17.5 V22.5 Z" fill="#dcdcdc"/></svg>
<div style="left:1739.7px;top:437.8px;width:125px;height:26px;background:#434343;border:1px solid #686868;border-radius:4px;"></div><div style="left:1842.0px;top:437.8px;width:1px;height:26px;background:#686868;"></div>
<span class="t" style="left:1743.5px;top:439.25px;font-size:16.5px;line-height:22.5px;color:#f4f4f4;transform:scaleX(1.0269);transform-origin:0 50%;">0%</span>
<svg style="left:1849.0px;top:449.75px;" width="11.0" height="6.5" viewBox="0 0 11.0 6.5"><path d="M1 1 L5.5 5.5 L10.0 1" fill="none" stroke="#c4c4c4" stroke-width="1.25"/></svg>
<svg style="left:1707px;top:474px;" width="30" height="24" viewBox="0 0 30 24"><path d="M4.5 4 V20" stroke="#dcdcdc" stroke-width="1.4"/><path d="M4.5 0.5 L7.8 5.5 H1.2 Z M4.5 23.5 L7.8 18.5 H1.2 Z" fill="#dcdcdc"/><text x="11" y="22.5" font-size="29" font-family="Liberation Serif, serif" fill="#dcdcdc" textLength="17" lengthAdjust="spacingAndGlyphs">T</text></svg>
<div style="left:1739.7px;top:470.3px;width:81.3px;height:30.3px;background:#434343;border:1px solid #686868;border-radius:0px;"></div>
<span class="t" style="left:1744px;top:473.75px;font-size:16.5px;line-height:22.5px;color:#f4f4f4;transform:scaleX(0.9952);transform-origin:0 50%;">100%</span>
<svg style="left:1912px;top:474px;" width="28" height="26" viewBox="0 0 28 26"><text x="4" y="17.5" font-size="25" font-weight="bold" font-family="Liberation Serif, serif" fill="#dcdcdc" textLength="20" lengthAdjust="spacingAndGlyphs">T</text><path d="M4 21.5 H24" stroke="#dcdcdc" stroke-width="1.4"/><path d="M0.5 21.5 L5 18.5 V24.5 Z M27.5 21.5 L23 18.5 V24.5 Z" fill="#dcdcdc"/></svg>
<div style="left:1943.7px;top:470.3px;width:81.3px;height:30.3px;background:#434343;border:1px solid #686868;border-radius:0px;"></div>
<span class="t" style="left:1948px;top:473.75px;font-size:16.5px;line-height:22.5px;color:#f4f4f4;transform:scaleX(0.9952);transform-origin:0 50%;">100%</span>
<svg style="left:1709px;top:510px;" width="26" height="26" viewBox="0 0 26 26"><g fill="none" stroke="#dcdcdc" stroke-width="1.4"><path d="M2 14.5 L7 2.5 L12 14.5 M4 10.5 H10"/><path d="M1 18 H13"/><path d="M20 17 V23"/><path d="M15.5 13.5 H24"/></g><text x="15" y="10.5" font-size="12" fill="#dcdcdc" font-family="Liberation Sans, sans-serif">a</text><path d="M20 14.5 L23.2 19 H16.8 Z" fill="#dcdcdc"/></svg>
<div style="left:1740.5px;top:506.7px;width:81.3px;height:30px;background:#434343;border:1px solid #686868;border-radius:0px;"></div>
<span class="t" style="left:1745px;top:510.25px;font-size:16.5px;line-height:22.5px;color:#f4f4f4;transform:scaleX(1.0352);transform-origin:0 50%;">0 pt</span>
<span class="t" style="left:1890px;top:510.95px;font-size:16.5px;line-height:22.5px;color:#c6c6c6;letter-spacing:3.02px;">색상:</span>
<div style="left:1942.5px;top:505.3px;width:83.8px;height:32.5px;background:#322d2c;"></div>
<span class="t" style="left:1721px;top:545.0px;font-size:25px;line-height:28px;color:#dedede;font-family:'Liberation Serif',serif;font-weight:bold;text-align:center;width:40px;">T</span>
<span class="t" style="left:1757.5px;top:545.0px;font-size:25px;line-height:28px;color:#dedede;font-family:'Liberation Serif',serif;font-weight:bold;text-align:center;width:40px;font-style:italic;font-weight:normal;">T</span>
<span class="t" style="left:1793px;top:545.0px;font-size:23px;line-height:28px;color:#dedede;font-family:'Liberation Serif',serif;font-weight:bold;text-align:center;width:40px;letter-spacing:-1px;">TT</span>
<span class="t" style="left:1829px;top:545.0px;font-size:23px;line-height:28px;color:#dedede;font-family:'Liberation Serif',serif;font-weight:bold;text-align:center;width:40px;">T<span style="font-size:16px">T</span></span>
<span class="t" style="left:1867.5px;top:545.0px;font-size:23px;line-height:28px;color:#dedede;font-family:'Liberation Serif',serif;font-weight:bold;text-align:center;width:40px;">T<span style="font-size:11px;position:relative;top:-9px">1</span></span>
<span class="t" style="left:1902.5px;top:545.0px;font-size:23px;line-height:28px;color:#dedede;font-family:'Liberation Serif',serif;font-weight:bold;text-align:center;width:40px;">T<span style="font-size:11px;position:relative;top:3px">1</span></span>
<span class="t" style="left:1937.5px;top:544.0px;font-size:23px;line-height:28px;color:#dedede;font-family:'Liberation Serif',serif;font-weight:bold;text-align:center;width:40px;font-weight:normal;">T</span>
<div style="left:1948.5px;top:570px;width:18px;height:1.5px;background:#dedede;"></div>
<span class="t" style="left:1972px;top:545.0px;font-size:23px;line-height:28px;color:#dedede;font-family:'Liberation Serif',serif;font-weight:bold;text-align:center;width:40px;font-weight:normal;">T</span>
<div style="left:1984px;top:558.3px;width:16px;height:1.5px;background:#dedede;"></div>
<span class="t" style="left:1719px;top:585.0px;font-size:28px;line-height:30px;color:#8d8d8d;font-family:'Liberation Serif',serif;text-align:center;width:44px;font-weight:bold;">fi</span>
<span class="t" style="left:1755.5px;top:585.0px;font-size:28px;line-height:30px;color:#8d8d8d;font-family:'Liberation Serif',serif;text-align:center;width:44px;font-weight:bold;font-style:italic;font-weight:normal;">&#x1A1;</span>
<span class="t" style="left:1791px;top:585.0px;font-size:28px;line-height:30px;color:#8d8d8d;font-family:'Liberation Serif',serif;text-align:center;width:44px;font-weight:bold;">st</span>
<span class="t" style="left:1827px;top:585.0px;font-size:28px;line-height:30px;color:#8d8d8d;font-family:'Liberation Serif',serif;text-align:center;width:44px;font-weight:bold;font-style:italic;font-weight:normal;">A</span>
<span class="t" style="left:1865.5px;top:588.0px;font-size:25px;line-height:30px;color:#8d8d8d;font-family:'Liberation Serif',serif;text-align:center;width:44px;font-weight:bold;">aa</span>
<svg style="left:1874.5px;top:589px;" width="26" height="8" viewBox="0 0 26 8"><path d="M1 4 H22" stroke="#8d8d8d" stroke-width="1.4"/><path d="M25 4 L20 1 V7 Z" fill="#8d8d8d"/></svg>
<span class="t" style="left:1900.5px;top:585.0px;font-size:28px;line-height:30px;color:#8d8d8d;font-family:'Liberation Serif',serif;text-align:center;width:44px;font-weight:bold;font-style:italic;font-weight:normal;">T</span>
<span class="t" style="left:1935.5px;top:585.0px;font-size:28px;line-height:30px;color:#8d8d8d;font-family:'Liberation Serif',serif;text-align:center;width:44px;font-weight:bold;">1<span style="font-size:16px;position:relative;top:-9px">st</span></span>
<span class="t" style="left:1970px;top:585.0px;font-size:28px;line-height:30px;color:#8d8d8d;font-family:'Liberation Serif',serif;text-align:center;width:44px;font-weight:bold;font-weight:normal;">&#xBD;</span>
<div style="left:1709.7px;top:626.7px;width:178.6px;height:30px;background:#434343;border:1px solid #686868;border-radius:4px;"></div>
<span class="t" style="left:1723.3px;top:630.95px;font-size:17.5px;line-height:23.5px;color:#f4f4f4;letter-spacing:1.53px;">스페인어</span>
<svg style="left:1872.8px;top:640.25px;" width="11.0" height="6.5" viewBox="0 0 11.0 6.5"><path d="M1 1 L5.5 5.5 L10.0 1" fill="none" stroke="#c4c4c4" stroke-width="1.25"/></svg>
<span class="t" style="left:1895px;top:630.0px;font-size:13px;line-height:14px;color:#d4d4d4;">a</span>
<span class="t" style="left:1903.5px;top:631.5px;font-size:18px;line-height:20px;color:#d4d4d4;">a</span>
<div style="left:1925.8px;top:626.7px;width:100px;height:30px;background:#434343;border:1px solid #686868;border-radius:4px;"></div>
<span class="t" style="left:1940px;top:630.95px;font-size:17.5px;line-height:23.5px;color:#f4f4f4;letter-spacing:0.43px;">선명...</span>
<svg style="left:2009.8px;top:640.25px;" width="11.0" height="6.5" viewBox="0 0 11.0 6.5"><path d="M1 1 L5.5 5.5 L10.0 1" fill="none" stroke="#c4c4c4" stroke-width="1.25"/></svg>
<div style="left:1701.2px;top:662.6px;width:377.29999999999995px;height:2px;background:#3a3a3a;"></div>
<div style="left:1701.2px;top:664.5px;width:377.29999999999995px;height:42.5px;background:#424242;"></div>
<div style="left:1701.2px;top:706.5px;width:377.29999999999995px;height:1px;background:#3a3a3a;"></div>
<div style="left:1762px;top:664.5px;width:59.2px;height:43.2px;background:#535353;"></div>
<div style="left:1761px;top:664.5px;width:1px;height:42px;background:#3a3a3a;"></div>
<div style="left:1821.2px;top:664.5px;width:1px;height:42px;background:#3a3a3a;"></div>
<span class="t" style="left:1717.5px;top:672.95px;font-size:17.5px;line-height:23.5px;color:#a6a6a6;letter-spacing:-0.20px;">단락</span>
<span class="t" style="left:1777px;top:672.95px;font-size:17.5px;line-height:23.5px;color:#ececec;letter-spacing:-0.20px;">속성</span>
<svg style="left:2054.5px;top:680.7px;" width="16" height="12" viewBox="0 0 16 12"><rect x="0" y="0.0" width="15.5" height="1.6" fill="#cfcfcf"/><rect x="0" y="3.2" width="15.5" height="1.6" fill="#cfcfcf"/><rect x="0" y="6.4" width="15.5" height="1.6" fill="#cfcfcf"/><rect x="0" y="9.600000000000001" width="15.5" height="1.6" fill="#cfcfcf"/></svg>
<div style="left:1718.3px;top:716.3px;width:34.2px;height:34.2px;background:#3a3a3a;border-radius:3px;border:1px solid #4a4a4a;"></div>
<svg style="left:1724.5px;top:724px;" width="22" height="19" viewBox="0 0 22 19"><rect x="0.9" y="0.9" width="20.2" height="17.2" fill="#3a3a3a" stroke="#dedede" stroke-width="1.8"/><path d="M2 17 V13 L6 9.5 L9 12 L11 7 L14 11 L17 10 L20 13 V17 Z" fill="#dedede"/><rect x="15.5" y="4" width="3" height="3" fill="#dedede"/></svg>
<span class="t" style="left:1762.5px;top:722.75px;font-size:17.5px;line-height:23.5px;color:#d2d2d2;letter-spacing:1.43px;">픽셀 레이어</span>
<div style="left:1701.2px;top:757.6px;width:377.29999999999995px;height:1.5px;background:#3d3d3d;"></div>
<div style="left:2053.3px;top:759px;width:25.2px;height:261px;background:#595959;"></div>
<svg style="left:2061.5px;top:772.25px;" width="11.0" height="6.5" viewBox="0 0 11.0 6.5"><path d="M1 5.5 L5.5 1 L10 5.5" fill="none" stroke="#b0b0b0" stroke-width="1.2"/></svg>
<div style="left:2056.7px;top:785.8px;width:17.8px;height:106px;background:#6b6b6b;border-radius:3px;"></div>
<svg style="left:2061.5px;top:1002.25px;" width="11.0" height="6.5" viewBox="0 0 11.0 6.5"><path d="M1 1 L5.5 5.5 L10.0 1" fill="none" stroke="#b0b0b0" stroke-width="1.2"/></svg>
<svg style="left:1712.375px;top:774.9875px;" width="13.25" height="7.625" viewBox="0 0 13.25 7.625"><path d="M1 1 L6.625 6.625 L12.25 1" fill="none" stroke="#c8c8c8" stroke-width="1.3"/></svg>
<span class="t" style="left:1736.3px;top:768.95px;font-size:17.5px;line-height:23.5px;color:#ffffff;letter-spacing:2.80px;">변형</span>
<div style="left:1715.3px;top:830.5px;width:37.2px;height:38.3px;background:#383838;border-radius:3px;border:1px solid #494949;"></div>
<svg style="left:1727px;top:838px;" width="14" height="23" viewBox="0 0 14 23"><rect x="2" y="1.5" width="10" height="11" rx="5" fill="none" stroke="#dedede" stroke-width="2"/><rect x="2" y="10.5" width="10" height="11" rx="5" fill="none" stroke="#dedede" stroke-width="2"/><path d="M7 7.5 V15.5" stroke="#dedede" stroke-width="2.2" stroke-linecap="round"/></svg>
<span class="t" style="left:1787.5px;top:815.95px;font-size:17.5px;line-height:23.5px;color:#d2d2d2;">폭</span>
<div style="left:1815.3px;top:812.5px;width:84.7px;height:30.3px;background:#434343;border:1px solid #686868;border-radius:0px;"></div>
<span class="t" style="left:1819.7px;top:816.25px;font-size:16.5px;line-height:22.5px;color:#f4f4f4;transform:scaleX(0.9964);transform-origin:0 50%;">938 <span style="font-size:14.5px">픽셀</span></span>
<span class="t" style="left:1915.5px;top:816.25px;font-size:16.5px;line-height:22.5px;color:#d2d2d2;">X</span>
<div style="left:1935.5px;top:812.5px;width:84.8px;height:30.3px;background:#434343;border:1px solid #686868;border-radius:0px;"></div>
<span class="t" style="left:1939px;top:816.25px;font-size:16.5px;line-height:22.5px;color:#f4f4f4;transform:scaleX(1.0083);transform-origin:0 50%;">682 <span style="font-size:14.5px">픽셀</span></span>
<span class="t" style="left:1770px;top:859.95px;font-size:17.5px;line-height:23.5px;color:#d2d2d2;letter-spacing:1.80px;">높이</span>
<div style="left:1815.3px;top:855.5px;width:84.7px;height:30.3px;background:#434343;border:1px solid #686868;border-radius:0px;"></div>
<span class="t" style="left:1819.7px;top:859.25px;font-size:16.5px;line-height:22.5px;color:#f4f4f4;transform:scaleX(0.9973);transform-origin:0 50%;">1004 <span style="font-size:14.5px">픽셀</span></span>
<span class="t" style="left:1915.5px;top:859.25px;font-size:16.5px;line-height:22.5px;color:#d2d2d2;">Y</span>
<div style="left:1935.5px;top:855.5px;width:84.8px;height:30.3px;background:#434343;border:1px solid #686868;border-radius:0px;"></div>
<span class="t" style="left:1939px;top:859.25px;font-size:16.5px;line-height:22.5px;color:#f4f4f4;transform:scaleX(1.0083);transform-origin:0 50%;">481 <span style="font-size:14.5px">픽셀</span></span>
<svg style="left:1761.5px;top:909px;" width="22" height="15" viewBox="0 0 22 15"><path d="M20.5 14 H1.5 L15 1.5" fill="none" stroke="#d6d6d6" stroke-width="1.4"/><path d="M9.5 6.5 C12.5 8.5 13.5 11 13.5 14" fill="none" stroke="#d6d6d6" stroke-width="1.3"/></svg>
<div style="left:1791.7px;top:903.7px;width:88px;height:26.3px;background:#434343;border:1px solid #686868;border-radius:4px;"></div><div style="left:1857.0px;top:903.7px;width:1px;height:26.3px;background:#686868;"></div>
<span class="t" style="left:1796.7px;top:905.75px;font-size:16.5px;line-height:22.5px;color:#f4f4f4;transform:scaleX(1.0073);transform-origin:0 50%;">0.00°</span>
<svg style="left:1864.2px;top:915.75px;" width="11.0" height="6.5" viewBox="0 0 11.0 6.5"><path d="M1 1 L5.5 5.5 L10.0 1" fill="none" stroke="#c4c4c4" stroke-width="1.25"/></svg>
<svg style="left:1947px;top:906px;" width="25" height="23" viewBox="0 0 25 23"><path d="M1 5.5 L6.5 11.5 L1 17.5 Z" fill="none" stroke="#dcdcdc" stroke-width="1.3"/><path d="M23.5 5 L16 11.5 L23.5 18 Z" fill="#dcdcdc"/><path d="M11.5 0.5 V22.5" stroke="#dcdcdc" stroke-width="1.3" stroke-dasharray="1.5 1.5"/></svg>
<svg style="left:1990.5px;top:905px;" width="22" height="25" viewBox="0 0 22 25"><path d="M5 1.5 L11 6.5 L17 1.5 Z" fill="none" stroke="#dcdcdc" stroke-width="1.3"/><path d="M4 23.5 L11 15.5 L18 23.5 Z" fill="#dcdcdc"/><path d="M0.5 11.5 H21.5" stroke="#dcdcdc" stroke-width="1.3" stroke-dasharray="1.5 1.5"/></svg>
<div style="left:1701.2px;top:952.3px;width:352.10000000000014px;height:1.5px;background:#3d3d3d;"></div>
<svg style="left:1712.375px;top:970.1875px;" width="13.25" height="7.625" viewBox="0 0 13.25 7.625"><path d="M1 1 L6.625 6.625 L12.25 1" fill="none" stroke="#c8c8c8" stroke-width="1.3"/></svg>
<span class="t" style="left:1736.3px;top:964.1500000000001px;font-size:17.5px;line-height:23.5px;color:#ffffff;letter-spacing:2.38px;">정렬 및 분포</span>
<div style="left:1701.2px;top:1058px;width:377.29999999999995px;height:1.5px;background:#383838;"></div>
<div style="left:1701.2px;top:1059.5px;width:377.29999999999995px;height:11.5px;background:#4f4f4f;"></div>
<div style="left:1875px;top:1062px;width:29px;height:5px;background:repeating-linear-gradient(90deg,#3c3c3c 0 1px,transparent 1px 3px);"></div>
<div style="left:2183.3px;top:92px;width:374.6999999999998px;height:1448px;background:#535353;"></div>
<div style="left:2183.3px;top:92px;width:374.6999999999998px;height:17px;background:#424242;"></div>
<div style="left:2183.3px;top:108.5px;width:374.6999999999998px;height:1.5px;background:#3a3a3a;"></div>
<svg style="left:2539.5px;top:96.5px;" width="12" height="8" viewBox="0 0 12 8"><path d="M1 0.8 L4.5 4 L1 7.2 M6.5 0.8 L10 4 L6.5 7.2" fill="none" stroke="#d4d4d4" stroke-width="1.3"/></svg>
<div style="left:2183.3px;top:110px;width:374.6999999999998px;height:40.5px;background:#424242;"></div><div style="left:2183.3px;top:149.5px;width:374.6999999999998px;height:1.2px;background:#3a3a3a;"></div><div style="left:2183.3px;top:110px;width:108.69999999999982px;height:41.0px;background:#535353;"></div><div style="left:2292px;top:110px;width:1px;height:39.5px;background:#3a3a3a;"></div><span class="t" style="left:2198px;top:117.2px;font-size:17.5px;line-height:23.5px;color:#e8e8e8;letter-spacing:0.00px;">내비게이터</span><svg style="left:2535px;top:125.3px;" width="16" height="12" viewBox="0 0 16 12"><rect x="0" y="0.0" width="15.5" height="1.6" fill="#cfcfcf"/><rect x="0" y="3.2" width="15.5" height="1.6" fill="#cfcfcf"/><rect x="0" y="6.4" width="15.5" height="1.6" fill="#cfcfcf"/><rect x="0" y="9.600000000000001" width="15.5" height="1.6" fill="#cfcfcf"/></svg>
<div style="left:2225px;top:159px;width:286.5px;height:180px;background:#ffffff;border:1px solid #3a3a3a;"></div>
<div style="left:2226px;top:160px;width:284.5px;height:178px;background:#ffffff;border:2.6px solid #f8433f;"></div>
<svg style="left:0;top:0" width="2560" height="400" viewBox="0 0 2560 400"><g transform="translate(2200.82,120.16) scale(0.15386)"><defs>
<linearGradient id="jg2" gradientUnits="userSpaceOnUse" x1="0" y1="610" x2="0" y2="1330">
<stop offset="0" stop-color="#2a2d40"/><stop offset="0.3" stop-color="#272b3d"/><stop offset="0.65" stop-color="#222737"/><stop offset="1" stop-color="#202534"/>
</linearGradient>
<linearGradient id="sg2" x1="0" y1="0" x2="0" y2="1">
<stop offset="0" stop-color="#f1f1f7"/><stop offset="0.5" stop-color="#ebebf3"/><stop offset="1" stop-color="#e4e5ee"/>
</linearGradient>
<filter id="jb2" x="-5%" y="-5%" width="110%" height="110%"><feGaussianBlur stdDeviation="6"/></filter>
</defs>
<path d="M922 706 C950 718 985 725 1010 724.5 C1040 724 1065 716 1084 705 L1075 760 L1050 880 L1030 965 L1006 1077 L1006 1115 L1024 1277 L965 1277 L988 1110 L988 1072 L969 965 L951 844 L935 760 Z" fill="url(#sg2)"/>
<path d="M922 712 C950 730 980 737 1003 737 C1032 737 1062 727 1084 710" fill="none" stroke="#fbfbfd" stroke-width="9"/>
<path d="M927 727 C952 739 980 743.8 1003 743.5 C1032 743 1060 736 1079 725.5" fill="none" stroke="#d9d9e6" stroke-width="1.5"/>
<path d="M960 1276 H1026 L1030 1329.5 H958 Z" fill="#181c2b"/>
<path d="M962 1277 H1024 V1280 H962 Z" fill="#15182a"/>
<clipPath id="jc2"><path d="M918 619.2 C912 630 905 638 899 642.5 C890 649 880 655 869.5 660 L814.5 683.5 L764.7 707.2 L722.3 728.4 C717 731 714 733 712.3 734.6 C709 739 707 743 704.8 747 C702 755 700 762 698.6 769.5 L691.1 807 L684.9 844.3 L677.4 894.2 L671.2 944 L667 965 L661.5 1015 L658.7 1065 L657.5 1120 L657.5 1329.5 L961.6 1329.5 L969.1 1277 L974.1 1239 L981.6 1164.5 L986.6 1104.6 L988 1080 L987.8 1072.2 L979.1 1027.3 L969.1 965 L961.6 906.7 L951.7 844.3 L939.2 774.5 L930.5 734.6 L924.2 707.2 C920 695 918.3 688 918 679.8 C917 665 917 655 917.2 644.9 Z"/><path d="M1074.2 610 C1076 616 1082 619 1087.2 622.4 C1094 629 1100 636 1107.2 641.1 C1116 647.5 1125 653 1134.6 657.3 L1179.5 679.8 L1229.3 707.2 L1266.7 729.6 L1283 739.6 C1288 744 1291 749 1294.1 754.6 C1298 764 1301 774 1304.1 784.5 C1308 796 1311 808 1312.9 819.4 L1317.8 869.3 L1322.8 919.1 L1326.6 965 L1330.3 1039.8 L1331.6 1139.5 L1330.3 1239.3 L1327.8 1329.5 L1028.6 1329.5 L1023.6 1276.7 L1017.4 1214.3 L1009.9 1164.5 L1006.2 1114.6 L1006.2 1077.2 L1017.4 1027.3 L1029.9 965 L1036.1 931.6 L1044.8 881.7 L1054.8 831.9 L1064.8 782 L1074.7 734.6 L1082.2 702.2 C1086 692 1088.5 686 1089.7 679.8 C1091 672 1091.5 666 1091 659.8 C1090.5 654 1089 649 1087.2 644.9 C1082 640 1079 636 1077.2 632.4 C1075 625 1074 617 1074.2 610 Z"/></clipPath>
<g fill="url(#jg2)">
<path d="M918 619.2 C912 630 905 638 899 642.5 C890 649 880 655 869.5 660 L814.5 683.5 L764.7 707.2 L722.3 728.4 C717 731 714 733 712.3 734.6 C709 739 707 743 704.8 747 C702 755 700 762 698.6 769.5 L691.1 807 L684.9 844.3 L677.4 894.2 L671.2 944 L667 965 L661.5 1015 L658.7 1065 L657.5 1120 L657.5 1329.5 L961.6 1329.5 L969.1 1277 L974.1 1239 L981.6 1164.5 L986.6 1104.6 L988 1080 L987.8 1072.2 L979.1 1027.3 L969.1 965 L961.6 906.7 L951.7 844.3 L939.2 774.5 L930.5 734.6 L924.2 707.2 C920 695 918.3 688 918 679.8 C917 665 917 655 917.2 644.9 Z"/><path d="M1074.2 610 C1076 616 1082 619 1087.2 622.4 C1094 629 1100 636 1107.2 641.1 C1116 647.5 1125 653 1134.6 657.3 L1179.5 679.8 L1229.3 707.2 L1266.7 729.6 L1283 739.6 C1288 744 1291 749 1294.1 754.6 C1298 764 1301 774 1304.1 784.5 C1308 796 1311 808 1312.9 819.4 L1317.8 869.3 L1322.8 919.1 L1326.6 965 L1330.3 1039.8 L1331.6 1139.5 L1330.3 1239.3 L1327.8 1329.5 L1028.6 1329.5 L1023.6 1276.7 L1017.4 1214.3 L1009.9 1164.5 L1006.2 1114.6 L1006.2 1077.2 L1017.4 1027.3 L1029.9 965 L1036.1 931.6 L1044.8 881.7 L1054.8 831.9 L1064.8 782 L1074.7 734.6 L1082.2 702.2 C1086 692 1088.5 686 1089.7 679.8 C1091 672 1091.5 666 1091 659.8 C1090.5 654 1089 649 1087.2 644.9 C1082 640 1079 636 1077.2 632.4 C1075 625 1074 617 1074.2 610 Z"/></g>
<g clip-path="url(#jc2)">
<path d="M712 735 L722 729 C740 770 758 830 766 900 L770 965 L776 1065 L776 1165 L770 1239 L763 1307 L766 1329.5 L657.5 1329.5 L657.5 1120 L661 1015 L665 965 L677 894 L691 807 L699 769 Z" fill="#141a2c" opacity="0.1"/>
<path d="M1290 745 L1282 740 C1262 790 1232 880 1217 965 L1209.5 1115 L1217 1214 L1222 1329.5 L1327.8 1329.5 L1331.6 1140 L1326.6 965 L1313 819 L1304 784 Z" fill="#141a2c" opacity="0.1"/>
<path d="M835.7 729.6 L929.2 965 L959.1 1027.3 L986.6 1074.7 L987.8 1072.2 L979.1 1027.3 L969.1 965 L951.7 844.3 L930.5 734.6 L924.2 707.2 L918 680 L866.5 711 Z" fill="url(#jg2)"/>
<path d="M835.7 729.6 L929.2 965 L959.1 1027.3 L986.6 1074.7" fill="none" stroke="#12162a" stroke-width="1.6"/>
<path d="M835.7 729.6 L866.5 711 L845 698.5" fill="none" stroke="#0d101e" stroke-width="2.2"/>
<path d="M866.5 711 L918 681" fill="none" stroke="#13172a" stroke-width="1.2"/>
<path d="M1164.5 730.9 L1139.5 794 L1099.7 881.7 L1054.8 965 L1006.2 1077.2 L1017.4 1027.3 L1029.9 965 L1054.8 831.9 L1074.7 734.6 L1082.2 702.2 L1089.7 680 L1134.6 711 Z" fill="url(#jg2)"/>
<path d="M1164.5 730.9 L1139.5 794 L1099.7 881.7 L1054.8 965 L1006.2 1077.2" fill="none" stroke="#12162a" stroke-width="1.6"/>
<path d="M1164.5 730.9 L1134.6 711 L1154.5 698.5" fill="none" stroke="#0d101e" stroke-width="2.2"/>
<path d="M1134.6 711 L1090 682" fill="none" stroke="#13172a" stroke-width="1.2"/>
<path d="M1107.2 868 L1219.4 851.8 L1219.4 879.2 L1097.2 896.7" fill="#262a3c" stroke="#131a2c" stroke-width="1.2"/>
<path d="M767.2 1236.8 H833.2 L829.5 1286.6 C828 1296 824 1300 819.5 1301.6 L763.4 1306.6" fill="#222737" stroke="#10141f" stroke-width="1.5"/>
<path d="M767.2 1241 H832" fill="none" stroke="#10131f" stroke-width="1"/>
<path d="M1157 1230.5 L1218.1 1233 L1221.9 1300.3 C1200 1300 1188 1299 1179.5 1296.6 C1171 1293 1166 1288 1164.5 1281.6 Z" fill="#222737" stroke="#10141f" stroke-width="1.5"/>
<path d="M1158 1235 L1218 1237.5" fill="none" stroke="#10131f" stroke-width="1"/>
<path d="M837 965 L824.5 1237" fill="none" stroke="#2c3145" stroke-width="1"/>
<path d="M1172 965 L1169.5 1229" fill="none" stroke="#2c3145" stroke-width="1"/>
<path d="M722 729 C740 770 758 830 766 900 L770 965 L776 1065 L776 1165 L770 1239 L763 1307" fill="none" stroke="#141829" stroke-width="1.5"/>
<path d="M1282 740 C1262 790 1232 880 1217 965 L1209.5 1115 L1217 1214 L1222 1329.5" fill="none" stroke="#141829" stroke-width="1.5"/>
<circle cx="965.9" cy="1114.6" r="11.2" fill="#0c0e17"/><circle cx="965.9" cy="1114.6" r="9.6" fill="none" stroke="#3b3f4e" stroke-width="1.3"/><circle cx="965.9" cy="1114.6" r="6" fill="#141722"/>
<circle cx="963.9" cy="1112.6" r="0.9" fill="#3a3f52"/>
<circle cx="967.9" cy="1112.6" r="0.9" fill="#3a3f52"/>
<circle cx="963.9" cy="1116.6" r="0.9" fill="#3a3f52"/>
<circle cx="967.9" cy="1116.6" r="0.9" fill="#3a3f52"/>
<circle cx="951.2" cy="1258" r="11.2" fill="#0c0e17"/><circle cx="951.2" cy="1258" r="9.6" fill="none" stroke="#3b3f4e" stroke-width="1.3"/><circle cx="951.2" cy="1258" r="6" fill="#141722"/>
<circle cx="949.2" cy="1256" r="0.9" fill="#3a3f52"/>
<circle cx="953.2" cy="1256" r="0.9" fill="#3a3f52"/>
<circle cx="949.2" cy="1260" r="0.9" fill="#3a3f52"/>
<circle cx="953.2" cy="1260" r="0.9" fill="#3a3f52"/>
<path d="M1024 1096.5 L1053.6 1099" stroke="#0b0d16" stroke-width="2.5"/><circle cx="1025.5" cy="1096.5" r="2" fill="#d8dbe6"/>
<path d="M1039 1242 L1068.5 1244.5" stroke="#0b0d16" stroke-width="2.5"/><circle cx="1040.5" cy="1242" r="1.6" fill="#b8bccb"/>
</g></g></svg>
<div style="left:2183.3px;top:344.5px;width:374.6999999999998px;height:1.5px;background:#3a3a3a;"></div>
<div style="left:2183.3px;top:346px;width:87px;height:36px;background:#424242;"></div>
<div style="left:2270px;top:346px;width:1px;height:36px;background:#4a4a4a;"></div>
<span class="t" style="left:2188.3px;top:353.0px;font-size:17px;line-height:23px;color:#f0f0f0;transform:scaleX(0.9779);transform-origin:0 50%;">72.29%</span>
<svg style="left:2279.7px;top:360px;" width="16" height="9" viewBox="0 0 16 9"><path d="M0.5 8.5 L5 2.5 L7.5 5.5 L10 1 L15.5 8.5 Z" fill="#d8d8d8"/></svg>
<div style="left:2315px;top:358px;width:165px;height:5px;background:#7a7a7a;"></div>
<svg style="left:2384.6px;top:360.3px;" width="17.4" height="17.4" viewBox="0 0 17.4 17.4"><path d="M8.7 0.6 L16.6 9.5 V14 C16.6 15.7 15.6 16.7 14 16.7 H3.4 C1.8 16.7 0.8 15.7 0.8 14 V9.5 Z" fill="#e8e8e8" stroke="#3c3c3c" stroke-width="1"/></svg>
<svg style="left:2496px;top:356px;" width="26" height="13" viewBox="0 0 26 13"><path d="M0.5 12.5 L9 2.5 L12.5 6.5 L16.5 0.5 L25.5 12.5 Z" fill="#d8d8d8"/></svg>
<div style="left:2183.3px;top:382px;width:374.6999999999998px;height:3.4px;background:#3a3a3a;"></div>
<div style="left:2183.3px;top:385.3px;width:374.6999999999998px;height:42px;background:#424242;"></div><div style="left:2183.3px;top:426.3px;width:374.6999999999998px;height:1.2px;background:#3a3a3a;"></div><div style="left:2183.3px;top:385.3px;width:59.19999999999982px;height:42.5px;background:#535353;"></div><div style="left:2242.5px;top:385.3px;width:1px;height:41px;background:#3a3a3a;"></div><span class="t" style="left:2198.2px;top:393.25px;font-size:17.5px;line-height:23.5px;color:#e8e8e8;letter-spacing:-0.50px;">색상</span><svg style="left:2535px;top:400.9px;" width="16" height="12" viewBox="0 0 16 12"><rect x="0" y="0.0" width="15.5" height="1.6" fill="#cfcfcf"/><rect x="0" y="3.2" width="15.5" height="1.6" fill="#cfcfcf"/><rect x="0" y="6.4" width="15.5" height="1.6" fill="#cfcfcf"/><rect x="0" y="9.600000000000001" width="15.5" height="1.6" fill="#cfcfcf"/></svg>
<div style="left:2212.3px;top:458.5px;width:29.8px;height:29.5px;background:#ffffff;border:1px solid #3a3a3a;"></div>
<div style="left:2197px;top:443.2px;width:30px;height:29.2px;background:#322d2c;border:2.5px solid #ffffff;outline:1px solid #2a2a2a;box-shadow:inset 0 0 0 1px #1c1c1c;"></div>
<div style="left:2250px;top:437.9px;width:230px;height:115px;background:linear-gradient(to top,#000,rgba(0,0,0,0)),linear-gradient(to right,#fff,#ff5200);"></div>
<svg style="left:2270px;top:521px;" width="19" height="19" viewBox="0 0 19 19"><circle cx="9.5" cy="9.5" r="8.3" fill="none" stroke="#ffffff" stroke-width="1.2"/></svg>
<div style="left:2505px;top:437.9px;width:29.2px;height:115px;background:linear-gradient(to bottom,#ff0000 0%,#ff00ff 16.6%,#0000ff 33.3%,#00ffff 50%,#00ff00 66.6%,#ffff00 83.3%,#ff0000 100%);"></div>
<svg style="left:2491px;top:540px;" width="12" height="12" viewBox="0 0 12 12"><path d="M1.5 1.5 Q0.5 6 1.5 10.5 L5 10.5 L11 6 L5 1.5 Z" fill="#e6e6e6" stroke="#424242" stroke-width="0.6"/></svg>
<div style="left:2183.3px;top:584px;width:374.6999999999998px;height:3.7px;background:#3a3a3a;"></div>
<div style="left:2183.3px;top:587.6px;width:374.6999999999998px;height:41.5px;background:#424242;"></div><div style="left:2183.3px;top:628.1px;width:374.6999999999998px;height:1.2px;background:#3a3a3a;"></div><div style="left:2183.3px;top:587.6px;width:96.69999999999982px;height:42.0px;background:#535353;"></div><div style="left:2280px;top:587.6px;width:1px;height:40.5px;background:#3a3a3a;"></div><span class="t" style="left:2197.7px;top:595.3000000000001px;font-size:17.5px;line-height:23.5px;color:#e8e8e8;letter-spacing:-0.07px;">작업 내역</span><svg style="left:2535px;top:603px;" width="16" height="12" viewBox="0 0 16 12"><rect x="0" y="0.0" width="15.5" height="1.6" fill="#cfcfcf"/><rect x="0" y="3.2" width="15.5" height="1.6" fill="#cfcfcf"/><rect x="0" y="6.4" width="15.5" height="1.6" fill="#cfcfcf"/><rect x="0" y="9.600000000000001" width="15.5" height="1.6" fill="#cfcfcf"/></svg>
<div style="left:2183.3px;top:746.6px;width:350.89999999999964px;height:35px;background:#6b6b6b;"></div>
<div style="left:2534.2px;top:637px;width:23.800000000000182px;height:144.5px;background:#4d4d4d;"></div>
<div style="left:2183.3px;top:641.7px;width:350.89999999999964px;height:1.6px;background:#454545;"></div>
<div style="left:2192.2px;top:650.95px;width:17.5px;height:17.5px;border-top:1.2px solid #484848;border-left:1.2px solid #484848;border-bottom:1px solid #5e5e5e;border-right:1px solid #5e5e5e;"></div>
<svg style="left:2230.5px;top:650.95px;" width="23" height="21" viewBox="0 0 23 21"><path d="M13.5 1 L21.5 6 L14.5 14.5 L6.5 9.5 Z" fill="#e2e2e2"/><path d="M6.5 9.5 L1.5 15 L6 19.5 H22 M6 19.5 L14.5 14.5" fill="none" stroke="#e2e2e2" stroke-width="1.5" stroke-linejoin="round"/></svg>
<span class="t" style="left:2271.3px;top:648.9000000000001px;font-size:17.5px;line-height:23.5px;color:#e0e0e0;letter-spacing:1.99px;">지우개</span>
<div style="left:2183.3px;top:676.6px;width:350.89999999999964px;height:1.6px;background:#454545;"></div>
<div style="left:2192.2px;top:685.4px;width:17.5px;height:17.5px;border-top:1.2px solid #484848;border-left:1.2px solid #484848;border-bottom:1px solid #5e5e5e;border-right:1px solid #5e5e5e;"></div>
<svg style="left:2230.5px;top:685.4px;" width="23" height="21" viewBox="0 0 23 21"><path d="M13.5 1 L21.5 6 L14.5 14.5 L6.5 9.5 Z" fill="#e2e2e2"/><path d="M6.5 9.5 L1.5 15 L6 19.5 H22 M6 19.5 L14.5 14.5" fill="none" stroke="#e2e2e2" stroke-width="1.5" stroke-linejoin="round"/></svg>
<span class="t" style="left:2271.3px;top:683.35px;font-size:17.5px;line-height:23.5px;color:#e0e0e0;letter-spacing:1.99px;">지우개</span>
<div style="left:2183.3px;top:710.6px;width:350.89999999999964px;height:1.6px;background:#454545;"></div>
<div style="left:2192.2px;top:720.0px;width:17.5px;height:17.5px;border-top:1.2px solid #484848;border-left:1.2px solid #484848;border-bottom:1px solid #5e5e5e;border-right:1px solid #5e5e5e;"></div>
<svg style="left:2230.5px;top:720.0px;" width="23" height="21" viewBox="0 0 23 21"><path d="M13.5 1 L21.5 6 L14.5 14.5 L6.5 9.5 Z" fill="#e2e2e2"/><path d="M6.5 9.5 L1.5 15 L6 19.5 H22 M6 19.5 L14.5 14.5" fill="none" stroke="#e2e2e2" stroke-width="1.5" stroke-linejoin="round"/></svg>
<span class="t" style="left:2271.3px;top:717.95px;font-size:17.5px;line-height:23.5px;color:#e0e0e0;letter-spacing:1.99px;">지우개</span>
<div style="left:2183.3px;top:745.8000000000001px;width:350.89999999999964px;height:1.6px;background:#454545;"></div>
<div style="left:2192.2px;top:754.9000000000001px;width:17.5px;height:17.5px;border-top:1.2px solid #565656;border-left:1.2px solid #565656;border-bottom:1px solid #7a7a7a;border-right:1px solid #7a7a7a;"></div>
<svg style="left:2230.5px;top:754.9000000000001px;" width="23" height="21" viewBox="0 0 23 21"><path d="M13.5 1 L21.5 6 L14.5 14.5 L6.5 9.5 Z" fill="#e2e2e2"/><path d="M6.5 9.5 L1.5 15 L6 19.5 H22 M6 19.5 L14.5 14.5" fill="none" stroke="#e2e2e2" stroke-width="1.5" stroke-linejoin="round"/></svg>
<span class="t" style="left:2271.3px;top:752.8500000000001px;font-size:17.5px;line-height:23.5px;color:#e0e0e0;letter-spacing:1.99px;">지우개</span>
<svg style="left:2542.0px;top:649.25px;" width="11.0" height="6.5" viewBox="0 0 11.0 6.5"><path d="M1 5.5 L5.5 1 L10 5.5" fill="none" stroke="#9a9a9a" stroke-width="1.2"/></svg>
<div style="left:2537px;top:741.8px;width:17.8px;height:15px;background:#6b6b6b;border-radius:3px;"></div>
<svg style="left:2542.0px;top:763.25px;" width="11.0" height="6.5" viewBox="0 0 11.0 6.5"><path d="M1 1 L5.5 5.5 L10.0 1" fill="none" stroke="#9a9a9a" stroke-width="1.2"/></svg>
<div style="left:2183.3px;top:781px;width:374.6999999999998px;height:2px;background:#3a3a3a;"></div>
<svg style="left:2404px;top:791.5px;" width="21" height="18" viewBox="0 0 21 18"><path d="M8 0.8 H15 L20 5.5 V17 H10 V10 H8 Z" fill="#dcdcdc"/><path d="M15 0.8 V5.5 H20" fill="none" stroke="#535353" stroke-width="1"/><path d="M0.5 11.5 H9.5 M5 7 V16" stroke="#dcdcdc" stroke-width="2.6"/></svg>
<svg style="left:2454.5px;top:791.5px;" width="20" height="17" viewBox="0 0 20 17"><path d="M6.5 0.5 H13.5 L15 3 H18 C19 3 19.5 3.5 19.5 4.5 V15 C19.5 16 19 16.5 18 16.5 H2 C1 16.5 0.5 16 0.5 15 V4.5 C0.5 3.5 1 3 2 3 H5 Z" fill="#dcdcdc"/><circle cx="10" cy="9.5" r="4.2" fill="#535353"/><circle cx="10" cy="9.5" r="2.4" fill="#dcdcdc"/></svg>
<svg style="left:2500px;top:790.5px;" width="17" height="19" viewBox="0 0 17 19"><path d="M0.5 4 H16.5" stroke="#dcdcdc" stroke-width="1.7"/><path d="M5.5 3.5 V1 H11.5 V3.5" fill="none" stroke="#dcdcdc" stroke-width="1.5"/><path d="M2.2 5 V18 H14.8 V5" fill="none" stroke="#dcdcdc" stroke-width="1.7"/><path d="M6.2 7 V16 M8.5 7 V16 M10.8 7 V16" stroke="#dcdcdc" stroke-width="1.5"/></svg>
<div style="left:2183.3px;top:819px;width:374.6999999999998px;height:3.8px;background:#3a3a3a;"></div>
<div style="left:2183.3px;top:822.7px;width:374.6999999999998px;height:41.5px;background:#424242;"></div><div style="left:2183.3px;top:863.2px;width:374.6999999999998px;height:1.2px;background:#3a3a3a;"></div><div style="left:2183.3px;top:822.7px;width:75.69999999999982px;height:42.0px;background:#535353;"></div><div style="left:2259px;top:822.7px;width:1px;height:40.5px;background:#3a3a3a;"></div><span class="t" style="left:2198.2px;top:830.4000000000001px;font-size:17.5px;line-height:23.5px;color:#e8e8e8;letter-spacing:-0.41px;">레이어</span><div style="left:2317.6px;top:822.7px;width:1px;height:40.5px;background:#3a3a3a;"></div><span class="t" style="left:2272.6px;top:830.4000000000001px;font-size:17.5px;line-height:23.5px;color:#a8a8a8;letter-spacing:0.60px;">패스</span><svg style="left:2535px;top:838.5px;" width="16" height="12" viewBox="0 0 16 12"><rect x="0" y="0.0" width="15.5" height="1.6" fill="#cfcfcf"/><rect x="0" y="3.2" width="15.5" height="1.6" fill="#cfcfcf"/><rect x="0" y="6.4" width="15.5" height="1.6" fill="#cfcfcf"/><rect x="0" y="9.600000000000001" width="15.5" height="1.6" fill="#cfcfcf"/></svg>
<div style="left:2188.7px;top:878.4px;width:126.2px;height:29.8px;background:#434343;border:1px solid #686868;border-radius:4px;"></div>
<svg style="left:2201px;top:887.5px;" width="17" height="17" viewBox="0 0 17 17"><circle cx="6.5" cy="6.5" r="5" fill="none" stroke="#e0e0e0" stroke-width="2"/><path d="M10.2 10.2 L15 15" stroke="#e0e0e0" stroke-width="2.8" stroke-linecap="round"/></svg>
<span class="t" style="left:2223.8px;top:882.45px;font-size:17.5px;line-height:23.5px;color:#f4f4f4;letter-spacing:1.80px;">종류</span>
<svg style="left:2299.5px;top:891.75px;" width="11.0" height="6.5" viewBox="0 0 11.0 6.5"><path d="M1 1 L5.5 5.5 L10.0 1" fill="none" stroke="#c4c4c4" stroke-width="1.25"/></svg>
<svg style="left:2340.5px;top:883.5px;" width="19" height="17" viewBox="0 0 19 17"><rect x="0.8" y="0.8" width="17.4" height="15.4" fill="none" stroke="#dcdcdc" stroke-width="1.5"/><path d="M3 13.5 L7 7 L10 11 L12.5 8 L16 13.5 Z" fill="#dcdcdc"/></svg>
<svg style="left:2377px;top:883.5px;" width="17" height="17" viewBox="0 0 17 17"><circle cx="8.5" cy="8.5" r="7.5" fill="none" stroke="#dcdcdc" stroke-width="1.6"/><path d="M13.8 3.2 A7.5 7.5 0 0 1 3.2 13.8 Z" fill="#dcdcdc"/></svg>
<svg style="left:2413.5px;top:884px;" width="16" height="17" viewBox="0 0 16 17"><path d="M0.5 0.5 H15.5 V5 H13.8 C13.5 3 13 2.8 11.5 2.8 H9.6 V13.5 C9.6 14.6 10 15 11.8 15.2 V16.5 H4.2 V15.2 C6 15 6.4 14.6 6.4 13.5 V2.8 H4.5 C3 2.8 2.5 3 2.2 5 H0.5 Z" fill="#dcdcdc"/></svg>
<svg style="left:2449px;top:883.5px;" width="18" height="18" viewBox="0 0 18 18"><rect x="2.5" y="2.5" width="13" height="13" fill="none" stroke="#dcdcdc" stroke-width="1.6"/><rect x="0.6" y="0.6" width="4.4" height="4.4" fill="#535353" stroke="#dcdcdc" stroke-width="1.3"/><rect x="0.6" y="13" width="4.4" height="4.4" fill="#535353" stroke="#dcdcdc" stroke-width="1.3"/><rect x="13" y="0.6" width="4.4" height="4.4" fill="#535353" stroke="#dcdcdc" stroke-width="1.3"/><rect x="13" y="13" width="4.4" height="4.4" fill="#535353" stroke="#dcdcdc" stroke-width="1.3"/></svg>
<svg style="left:2486.5px;top:883px;" width="17" height="19" viewBox="0 0 17 19"><path d="M6 0.8 H12 L16.2 5 V14 H6 Z" fill="none" stroke="#dcdcdc" stroke-width="1.5"/><path d="M11.5 1 V5.5 H16" fill="none" stroke="#dcdcdc" stroke-width="1.3"/><rect x="0.5" y="9" width="9" height="9.5" fill="#dcdcdc"/></svg>
<div style="left:2529.5px;top:881px;width:12.8px;height:24.5px;background:#474747;border-radius:6.4px;border:1px solid #5c5c5c;"></div>
<div style="left:2529.5px;top:879.3px;width:12.8px;height:12.8px;background:#e2e2e2;border-radius:6.4px;"></div>
<div style="left:2183.3px;top:912.5px;width:374.6999999999998px;height:1.5px;background:#444;"></div>
<div style="left:2188.7px;top:922.4px;width:175.3px;height:29.5px;background:#434343;border:1px solid #686868;border-radius:4px;"></div>
<span class="t" style="left:2202.5px;top:926.45px;font-size:17.5px;line-height:23.5px;color:#f4f4f4;letter-spacing:2.60px;">표준</span>
<svg style="left:2348.5px;top:935.75px;" width="11.0" height="6.5" viewBox="0 0 11.0 6.5"><path d="M1 1 L5.5 5.5 L10.0 1" fill="none" stroke="#c4c4c4" stroke-width="1.25"/></svg>
<span class="t" style="left:2375.9px;top:924.95px;font-size:17.5px;line-height:23.5px;color:#d6d6d6;letter-spacing:1.76px;">불투명도:</span>
<div style="left:2460.6px;top:922.7px;width:80px;height:26px;background:#434343;border:1px solid #686868;border-radius:4px;"></div><div style="left:2517.9px;top:922.7px;width:1px;height:26px;background:#686868;"></div>
<span class="t" style="left:2464.5px;top:924.25px;font-size:16.5px;line-height:22.5px;color:#f4f4f4;transform:scaleX(1.0070);transform-origin:0 50%;">100%</span>
<svg style="left:2524.8px;top:934.75px;" width="11.0" height="6.5" viewBox="0 0 11.0 6.5"><path d="M1 1 L5.5 5.5 L10.0 1" fill="none" stroke="#c4c4c4" stroke-width="1.25"/></svg>
<div style="left:2183.3px;top:956.8px;width:374.6999999999998px;height:1.5px;background:#444;"></div>
<span class="t" style="left:2193px;top:967.95px;font-size:17.5px;line-height:23.5px;color:#d6d6d6;letter-spacing:2.28px;">잠그기:</span>
<svg style="left:2268.5px;top:970.5px;" width="17" height="17" viewBox="0 0 17 17"><rect x="0.6" y="0.6" width="15.8" height="15.8" fill="none" stroke="#dcdcdc" stroke-width="1.2"/><rect x="1" y="1" width="5" height="5" fill="#dcdcdc"/><rect x="1" y="6" width="5" height="5" fill="#535353"/><rect x="1" y="11" width="5" height="5" fill="#dcdcdc"/><rect x="6" y="1" width="5" height="5" fill="#535353"/><rect x="6" y="6" width="5" height="5" fill="#dcdcdc"/><rect x="6" y="11" width="5" height="5" fill="#535353"/><rect x="11" y="1" width="5" height="5" fill="#dcdcdc"/><rect x="11" y="6" width="5" height="5" fill="#535353"/><rect x="11" y="11" width="5" height="5" fill="#dcdcdc"/></svg>
<svg style="left:2301px;top:968px;" width="21" height="22" viewBox="0 0 21 22"><path d="M20 0.5 C15.5 4.5 11 10 9 13.5 L11.5 15.5 C14.5 12 18.5 5.5 20 0.5 Z" fill="#dcdcdc"/><path d="M8 14.5 C5 14.5 4.5 18 1 20.5 C5 22 10.5 20.5 10.5 16.5 Z" fill="#dcdcdc"/></svg>
<svg style="left:2333px;top:969.5px;" width="19" height="19" viewBox="0 0 19 19"><g transform="scale(0.79)"><path d="M12 0.5 L16 5.5 H13 V11 H18.5 V8 L23.5 12 L18.5 16 V13 H13 V18.5 H16 L12 23.5 L8 18.5 H11 V13 H5.5 V16 L0.5 12 L5.5 8 V11 H11 V5.5 H8 Z" fill="#dcdcdc"/></g></svg>
<svg style="left:2364.5px;top:968.5px;" width="23" height="21" viewBox="0 0 23 21"><path d="M4.5 4.5 H14 L18.5 9 V16.5 H4.5 Z" fill="none" stroke="#dcdcdc" stroke-width="1.6"/><path d="M4.5 0 V2.5 M0 4.5 H2.5 M18.5 0.5 V3 M20.5 4.5 H23 M4.5 18.5 V21 M0 16.5 H2.5 M18.5 18.5 V21 M20.5 16.5 H23" stroke="#dcdcdc" stroke-width="1.4"/></svg>
<svg style="left:2400.5px;top:968.5px;" width="17" height="20" viewBox="0 0 17 20"><path d="M4.5 9 V6 C4.5 0.5 12.5 0.5 12.5 6 V9" fill="none" stroke="#dcdcdc" stroke-width="2"/><rect x="0.5" y="8.5" width="16" height="11" rx="1.5" fill="#dcdcdc"/><circle cx="8.5" cy="14" r="1.8" fill="#535353"/></svg>
<span class="t" style="left:2428.9px;top:967.95px;font-size:17.5px;line-height:23.5px;color:#d6d6d6;letter-spacing:2.33px;">칠:</span>
<div style="left:2460.6px;top:966px;width:80px;height:26px;background:#434343;border:1px solid #686868;border-radius:4px;"></div><div style="left:2517.9px;top:966px;width:1px;height:26px;background:#686868;"></div>
<span class="t" style="left:2464.5px;top:967.75px;font-size:16.5px;line-height:22.5px;color:#f4f4f4;transform:scaleX(1.0070);transform-origin:0 50%;">100%</span>
<svg style="left:2524.8px;top:978.25px;" width="11.0" height="6.5" viewBox="0 0 11.0 6.5"><path d="M1 1 L5.5 5.5 L10.0 1" fill="none" stroke="#c4c4c4" stroke-width="1.25"/></svg>
<div style="left:2183.3px;top:1003.5px;width:374.6999999999998px;height:498px;background:#4d4d4d;"></div>
<div style="left:2534.2px;top:1003.5px;width:23.800000000000182px;height:498px;background:#4a4a4a;"></div>
<div style="left:2183.3px;top:1003.5px;width:350.89999999999964px;height:90px;background:#535353;"></div>
<div style="left:2227.8px;top:1003.5px;width:306.39999999999964px;height:43.5px;background:#6b6b6b;"></div>
<div style="left:2183.3px;top:1047px;width:350.89999999999964px;height:1.2px;background:#454545;"></div>
<div style="left:2183.3px;top:1093px;width:350.89999999999964px;height:1.2px;background:#454545;"></div>
<div style="left:2227.3px;top:1003.5px;width:1px;height:90px;background:#474747;"></div>
<svg style="left:2196.5px;top:1021.2px;" width="20" height="13" viewBox="0 0 20 13"><path d="M0.5 6.5 C4 1 8 0.3 10 0.3 C12 0.3 16 1 19.5 6.5 C16 12 12 12.7 10 12.7 C8 12.7 4 12 0.5 6.5 Z" fill="#e4e4e4"/><circle cx="10" cy="6.3" r="4.2" fill="#535353"/><circle cx="11.2" cy="4.8" r="1" fill="#e4e4e4"/></svg>
<svg style="left:2196.5px;top:1066.5px;" width="20" height="13" viewBox="0 0 20 13"><path d="M0.5 6.5 C4 1 8 0.3 10 0.3 C12 0.3 16 1 19.5 6.5 C16 12 12 12.7 10 12.7 C8 12.7 4 12 0.5 6.5 Z" fill="#e4e4e4"/><circle cx="10" cy="6.3" r="4.2" fill="#535353"/><circle cx="11.2" cy="4.8" r="1" fill="#e4e4e4"/></svg>
<svg style="left:2231px;top:1007.6px;" width="54.5" height="37.4" viewBox="0 0 54.5 37.4"><path d="M0.6 8 V0.6 H19 M38 0.6 H53.9 V8 M53.9 29 V36.8 H38 M19 36.8 H0.6 V29" fill="none" stroke="#ffffff" stroke-width="1.2"/><rect x="3.6" y="3.6" width="47.3" height="30.2" fill="#6b6b6b" stroke="#383838" stroke-width="1.2"/></svg>
<svg style="left:2241.6px;top:1015.9px;overflow:hidden;" width="34.5" height="22.1" viewBox="0 0 34.5 22.1"><rect width="34.5" height="22.1" fill="#ffffff"/><rect x="0" y="0" width="3" height="3" fill="#d2d2d2"/><rect x="0" y="6" width="3" height="3" fill="#d2d2d2"/><rect x="0" y="12" width="3" height="3" fill="#d2d2d2"/><rect x="0" y="18" width="3" height="3" fill="#d2d2d2"/><rect x="3" y="3" width="3" height="3" fill="#d2d2d2"/><rect x="3" y="9" width="3" height="3" fill="#d2d2d2"/><rect x="3" y="15" width="3" height="3" fill="#d2d2d2"/><rect x="3" y="21" width="3" height="3" fill="#d2d2d2"/><rect x="6" y="0" width="3" height="3" fill="#d2d2d2"/><rect x="6" y="6" width="3" height="3" fill="#d2d2d2"/><rect x="6" y="12" width="3" height="3" fill="#d2d2d2"/><rect x="6" y="18" width="3" height="3" fill="#d2d2d2"/><rect x="9" y="3" width="3" height="3" fill="#d2d2d2"/><rect x="9" y="9" width="3" height="3" fill="#d2d2d2"/><rect x="9" y="15" width="3" height="3" fill="#d2d2d2"/><rect x="9" y="21" width="3" height="3" fill="#d2d2d2"/><rect x="12" y="0" width="3" height="3" fill="#d2d2d2"/><rect x="12" y="6" width="3" height="3" fill="#d2d2d2"/><rect x="12" y="12" width="3" height="3" fill="#d2d2d2"/><rect x="12" y="18" width="3" height="3" fill="#d2d2d2"/><rect x="15" y="3" width="3" height="3" fill="#d2d2d2"/><rect x="15" y="9" width="3" height="3" fill="#d2d2d2"/><rect x="15" y="15" width="3" height="3" fill="#d2d2d2"/><rect x="15" y="21" width="3" height="3" fill="#d2d2d2"/><rect x="18" y="0" width="3" height="3" fill="#d2d2d2"/><rect x="18" y="6" width="3" height="3" fill="#d2d2d2"/><rect x="18" y="12" width="3" height="3" fill="#d2d2d2"/><rect x="18" y="18" width="3" height="3" fill="#d2d2d2"/><rect x="21" y="3" width="3" height="3" fill="#d2d2d2"/><rect x="21" y="9" width="3" height="3" fill="#d2d2d2"/><rect x="21" y="15" width="3" height="3" fill="#d2d2d2"/><rect x="21" y="21" width="3" height="3" fill="#d2d2d2"/><rect x="24" y="0" width="3" height="3" fill="#d2d2d2"/><rect x="24" y="6" width="3" height="3" fill="#d2d2d2"/><rect x="24" y="12" width="3" height="3" fill="#d2d2d2"/><rect x="24" y="18" width="3" height="3" fill="#d2d2d2"/><rect x="27" y="3" width="3" height="3" fill="#d2d2d2"/><rect x="27" y="9" width="3" height="3" fill="#d2d2d2"/><rect x="27" y="15" width="3" height="3" fill="#d2d2d2"/><rect x="27" y="21" width="3" height="3" fill="#d2d2d2"/><rect x="30" y="0" width="3" height="3" fill="#d2d2d2"/><rect x="30" y="6" width="3" height="3" fill="#d2d2d2"/><rect x="30" y="12" width="3" height="3" fill="#d2d2d2"/><rect x="30" y="18" width="3" height="3" fill="#d2d2d2"/><rect x="33" y="3" width="3" height="3" fill="#d2d2d2"/><rect x="33" y="9" width="3" height="3" fill="#d2d2d2"/><rect x="33" y="15" width="3" height="3" fill="#d2d2d2"/><rect x="33" y="21" width="3" height="3" fill="#d2d2d2"/><path d="M9.2 20.3 V12 C9.2 9.8 10 8.8 12 8.2 L13.8 7.2 L15 13 L15.2 20.3 Z M21.8 20.3 V12 C21.8 9.8 21 8.8 19 8.2 L17.2 7.2 L16 13 L15.8 20.3 Z" fill="#232838"/><path d="M14 8 L17 8 L15.9 15 L15.1 15 Z" fill="#eeeef4"/></svg>
<span class="t" style="left:2298.3px;top:1016.95px;font-size:17.5px;line-height:23.5px;color:#e4e4e4;letter-spacing:1.27px;">레이어 2</span>
<div style="left:2234.1px;top:1056.2px;width:47.9px;height:30.5px;background:#535353;border:1.2px solid #383838;"></div>
<div style="left:2241.6px;top:1060.6px;width:34.5px;height:22.4px;background:#ffffff;"></div>
<span class="t" style="left:2298.3px;top:1062.45px;font-size:17.5px;line-height:23.5px;color:#e4e4e4;letter-spacing:-0.50px;">배경</span>
<svg style="left:2494.3px;top:1061.6px;" width="17" height="19" viewBox="0 0 17 19"><path d="M4.5 8 V5.5 C4.5 0.5 12.5 0.5 12.5 5.5 V8" fill="none" stroke="#d6d6d6" stroke-width="1.6"/><rect x="1" y="7.5" width="15" height="10.5" rx="1.5" fill="none" stroke="#d6d6d6" stroke-width="1.6"/><circle cx="8.5" cy="12.8" r="1.7" fill="#d6d6d6"/></svg>
<div style="left:2183.3px;top:1501px;width:374.6999999999998px;height:1.6px;background:#3a3a3a;"></div>
<div style="left:2183.3px;top:1502.6px;width:374.6999999999998px;height:37px;background:#535353;"></div>
<svg style="left:2252.8px;top:1514px;" width="22" height="12" viewBox="0 0 22 12"><path d="M9 1 H6 A5 5 0 0 0 6 11 H9 M12.5 1 H15.5 A5 5 0 0 1 15.5 11 H12.5" fill="none" stroke="#9c9c9c" stroke-width="1.7"/><path d="M6.5 6 H15" stroke="#9c9c9c" stroke-width="2.4"/></svg>
<span class="t" style="left:2296.5px;top:1508.3px;font-size:22px;line-height:24px;color:#dcdcdc;font-style:italic;letter-spacing:-0.5px;">fx</span>
<svg style="left:2312.5px;top:1529px;" width="7" height="4" viewBox="0 0 7 4"><path d="M0 0 H7 L3.5 3.5 Z" fill="#f4f4f4"/></svg>
<svg style="left:2336px;top:1511.8px;" width="19.2" height="15.2" viewBox="0 0 19.2 15.2"><rect x="0" y="0" width="20" height="15.5" rx="1.5" fill="#dcdcdc"/><circle cx="10" cy="7.7" r="4.4" fill="#535353"/></svg>
<svg style="left:2378px;top:1512px;" width="17" height="17" viewBox="0 0 17 17"><circle cx="8.5" cy="8.5" r="7.5" fill="none" stroke="#dcdcdc" stroke-width="1.6"/><path d="M13.8 3.2 A7.5 7.5 0 0 1 3.2 13.8 Z" fill="#dcdcdc"/></svg>
<svg style="left:2393.5px;top:1529px;" width="7" height="4" viewBox="0 0 7 4"><path d="M0 0 H7 L3.5 3.5 Z" fill="#f4f4f4"/></svg>
<svg style="left:2416.5px;top:1511px;" width="19" height="17" viewBox="0 0 19 17"><path d="M0.5 2 C0.5 1 1 0.5 2 0.5 H8 L10 3 H17.5 C18.2 3 18.5 3.5 18.5 4 V15.5 C18.5 16 18.2 16.5 17.5 16.5 H1.5 C1 16.5 0.5 16 0.5 15.5 Z" fill="#dcdcdc"/><path d="M0.5 3.6 H10" stroke="#535353" stroke-width="0.8"/></svg>
<svg style="left:2458.8px;top:1511.5px;" width="17" height="17" viewBox="0 0 17 17"><rect x="0.8" y="0.8" width="15.4" height="15.4" fill="none" stroke="#dcdcdc" stroke-width="1.5"/><path d="M4.2 8.5 H12.8 M8.5 4.2 V12.8" stroke="#dcdcdc" stroke-width="1.8"/></svg>
<svg style="left:2499px;top:1510.5px;" width="17" height="19" viewBox="0 0 17 19"><path d="M0.5 4 H16.5" stroke="#dcdcdc" stroke-width="1.7"/><path d="M5.5 3.5 V1 H11.5 V3.5" fill="none" stroke="#dcdcdc" stroke-width="1.5"/><path d="M2.2 5 V18 H14.8 V5" fill="none" stroke="#dcdcdc" stroke-width="1.7"/><path d="M6.2 7 V16 M8.5 7 V16 M10.8 7 V16" stroke="#dcdcdc" stroke-width="1.5"/></svg>
<div style="left:2558.4px;top:37.5px;width:1.6px;height:1502px;background:#464646;"></div>
</body></html>
